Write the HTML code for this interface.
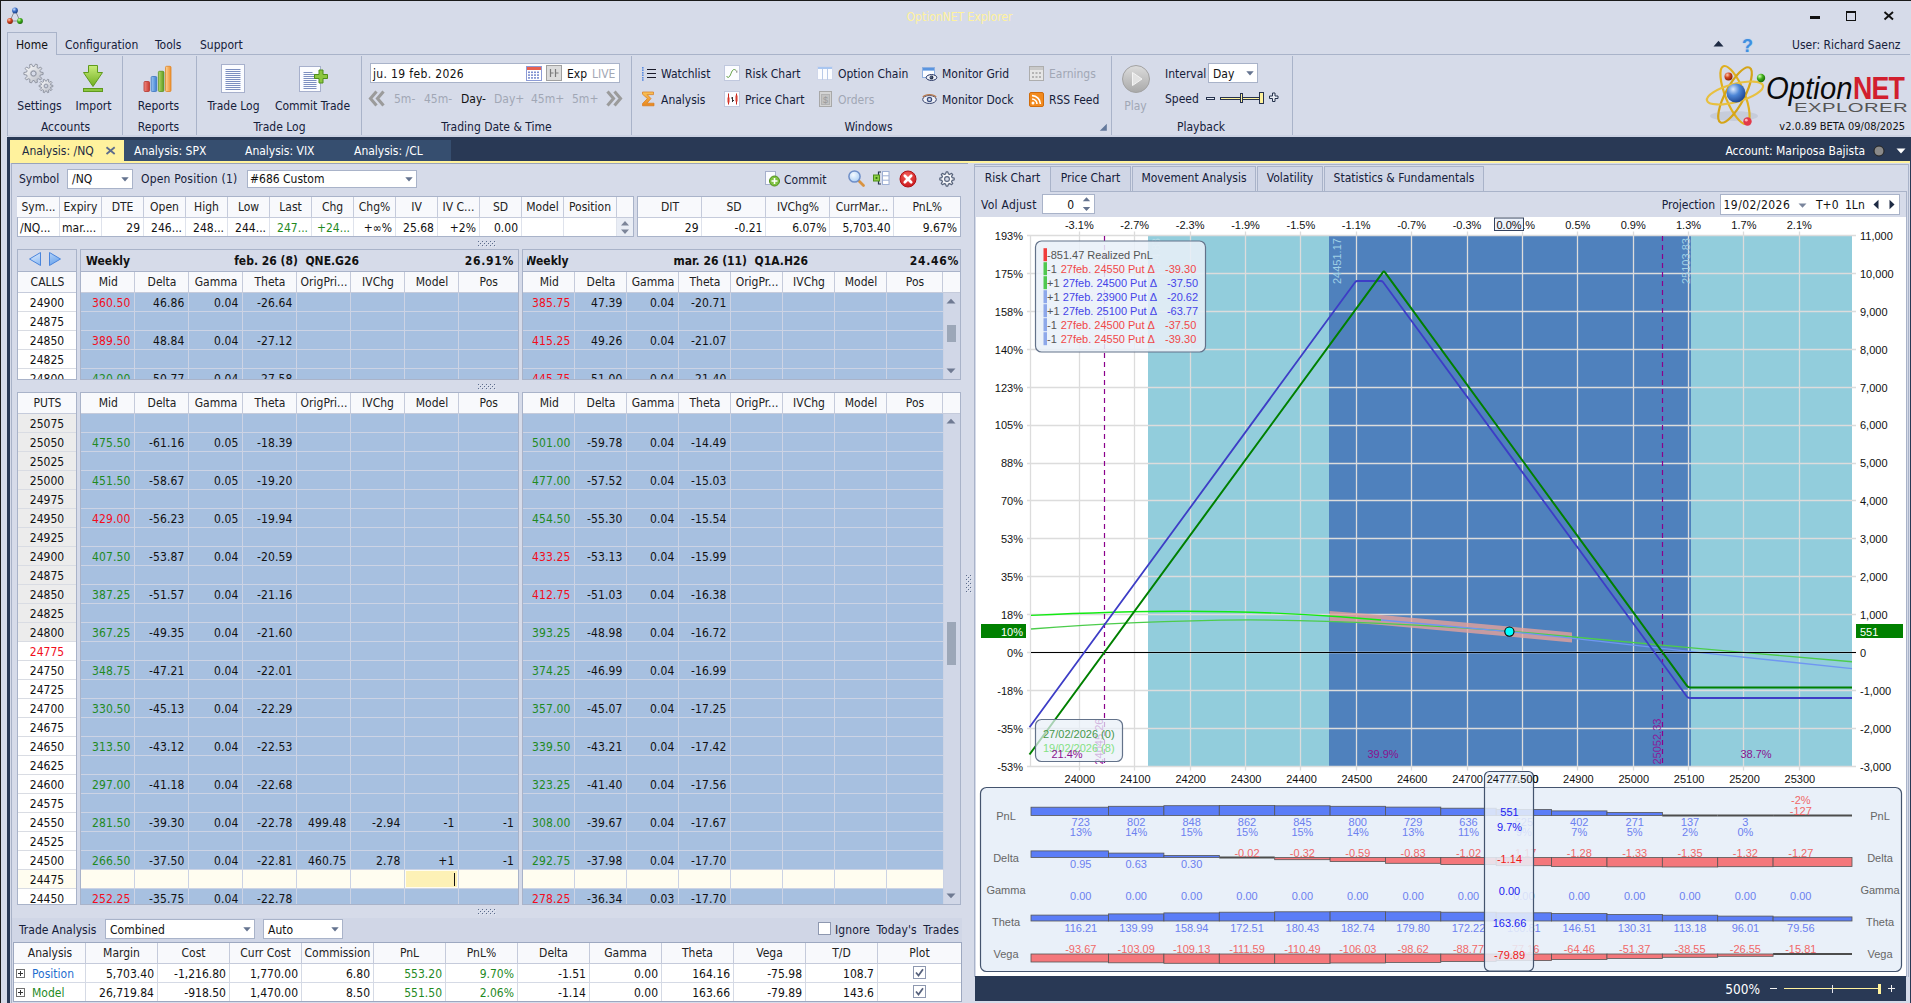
<!DOCTYPE html>
<html lang="en"><head><meta charset="utf-8"><title>OptionNET Explorer</title>
<style>
html,body{margin:0;padding:0}
body{width:1911px;height:1003px;position:relative;overflow:hidden;background:#d6dbe9;font:12px 'DejaVu Sans Condensed','Liberation Sans',sans-serif;color:#111}
.a{position:absolute;display:block}
.t{white-space:nowrap;overflow:visible}
.b{font-weight:bold}
</style></head>
<body>
<div class="a" style="left:0px;top:0px;width:1911px;height:1px;background:#1a1a1a;"></div>
<div class="a" style="left:0px;top:0px;width:1px;height:1003px;background:#1a1a1a;"></div>
<div class="a" style="left:1910px;top:137px;width:1px;height:866px;background:#293955;"></div>
<svg class="a" style="left:5px;top:6px" width="20" height="20" viewBox="0 0 20 20">
<defs>
<radialGradient id="gb" cx="35%" cy="30%" r="70%"><stop offset="0" stop-color="#cfe0ff"/><stop offset=".5" stop-color="#3d72c8"/><stop offset="1" stop-color="#1b3f86"/></radialGradient>
<radialGradient id="gr" cx="35%" cy="30%" r="70%"><stop offset="0" stop-color="#ffc9b0"/><stop offset=".5" stop-color="#d2441f"/><stop offset="1" stop-color="#8a210a"/></radialGradient>
<radialGradient id="gg" cx="35%" cy="30%" r="70%"><stop offset="0" stop-color="#d5ffb0"/><stop offset=".5" stop-color="#3fae1c"/><stop offset="1" stop-color="#1c6e0a"/></radialGradient>
</defs>
<path d="M10 4 L5 15 L15 15 Z" fill="none" stroke="#8b8f98" stroke-width="1"/>
<circle cx="10" cy="4.5" r="2.9" fill="url(#gb)"/><circle cx="5" cy="15" r="2.9" fill="url(#gr)"/><circle cx="15" cy="15" r="2.9" fill="url(#gg)"/></svg>
<div class="a t " style="top:8.5px;line-height:16px;height:16px;left:859.5px;width:200px;text-align:center;color:#fff29d;">OptionNET Explorer</div>
<div class="a" style="left:1810px;top:16px;width:10px;height:3px;background:#111;"></div>
<div class="a" style="left:1846px;top:11px;width:10px;height:10px;border:1px solid #111;border-top:2px solid #111;box-sizing:border-box;"></div>
<svg class="a" style="left:1883px;top:10px" width="12" height="12" viewBox="0 0 12 12"><path d="M1.5 2 L10 9.5 M10 2 L1.5 9.5" stroke="#111" stroke-width="1.9" fill="none"/></svg>
<div class="a" style="left:56px;top:54px;width:1854px;height:1px;background:#a9b3c9;"></div>
<div class="a" style="left:7px;top:54px;width:1px;height:82px;background:#a9b3c9;"></div>
<div class="a" style="left:7px;top:32px;width:50px;height:23px;background:#d6dbe9;border:1px solid #a9b3c9;border-bottom:none;box-sizing:border-box;"></div>
<div class="a t " style="top:36.5px;line-height:16px;height:16px;left:16px;color:#111;">Home</div>
<div class="a t " style="top:36.5px;line-height:16px;height:16px;left:65px;color:#15203a;">Configuration</div>
<div class="a t " style="top:36.5px;line-height:16px;height:16px;left:155px;color:#15203a;">Tools</div>
<div class="a t " style="top:36.5px;line-height:16px;height:16px;left:200px;color:#15203a;">Support</div>
<svg class="a" style="left:1713px;top:40px" width="11" height="7"><path d="M0.5 6.5 L5.5 0.8 L10.5 6.5 Z" fill="#1e2b44"/></svg>
<div class="a t " style="top:36px;line-height:16px;height:16px;left:1739.5px;width:16px;text-align:center;color:#3f8fe0;font:bold 18px 'Liberation Sans','DejaVu Sans',sans-serif;text-shadow:0 0 1.5px #8fc0f2;">?</div>
<div class="a t " style="top:36.5px;line-height:16px;height:16px;left:1792px;color:#15203a;">User: Richard Saenz</div>
<div class="a" style="left:122px;top:56px;width:1px;height:79px;background:#a9b3c9;"></div>
<div class="a" style="left:196px;top:56px;width:1px;height:79px;background:#a9b3c9;"></div>
<div class="a" style="left:361px;top:56px;width:1px;height:79px;background:#a9b3c9;"></div>
<div class="a" style="left:631px;top:56px;width:1px;height:79px;background:#a9b3c9;"></div>
<div class="a" style="left:1111px;top:56px;width:1px;height:79px;background:#a9b3c9;"></div>
<div class="a" style="left:1292px;top:56px;width:1px;height:79px;background:#a9b3c9;"></div>
<div class="a t " style="top:118.5px;line-height:16px;height:16px;left:-34.5px;width:200px;text-align:center;color:#15203a;">Accounts</div>
<div class="a t " style="top:118.5px;line-height:16px;height:16px;left:58.5px;width:200px;text-align:center;color:#15203a;">Reports</div>
<div class="a t " style="top:118.5px;line-height:16px;height:16px;left:179.5px;width:200px;text-align:center;color:#15203a;">Trade Log</div>
<div class="a t " style="top:118.5px;line-height:16px;height:16px;left:396.5px;width:200px;text-align:center;color:#15203a;">Trading Date &amp; Time</div>
<div class="a t " style="top:118.5px;line-height:16px;height:16px;left:768.5px;width:200px;text-align:center;color:#15203a;">Windows</div>
<div class="a t " style="top:118.5px;line-height:16px;height:16px;left:1101px;width:200px;text-align:center;color:#15203a;">Playback</div>
<div class="a t " style="top:97.5px;line-height:16px;height:16px;left:-20.5px;width:120px;text-align:center;color:#15203a;">Settings</div>
<div class="a t " style="top:97.5px;line-height:16px;height:16px;left:33.5px;width:120px;text-align:center;color:#15203a;">Import</div>
<div class="a t " style="top:97.5px;line-height:16px;height:16px;left:98.5px;width:120px;text-align:center;color:#15203a;">Reports</div>
<div class="a t " style="top:97.5px;line-height:16px;height:16px;left:173.5px;width:120px;text-align:center;color:#15203a;">Trade Log</div>
<div class="a t " style="top:97.5px;line-height:16px;height:16px;left:252.5px;width:120px;text-align:center;color:#15203a;">Commit Trade</div>
<svg class="a" style="left:20px;top:60px" width="40" height="36" viewBox="20 60 40 36">
<defs><linearGradient id="gm" x1="0" y1="0" x2="1" y2="1"><stop offset="0" stop-color="#ffffff"/><stop offset="1" stop-color="#b4b8c2"/></linearGradient></defs>
<path d="M43.1 72.5 L43.1 74.5 L40.3 75.0 L39.9 76.3 L41.8 78.3 L40.7 79.9 L38.2 78.7 L37.0 79.5 L37.4 82.3 L35.5 82.9 L34.2 80.5 L32.8 80.5 L31.5 82.9 L29.6 82.3 L30.0 79.5 L28.8 78.7 L26.3 79.9 L25.2 78.3 L27.1 76.3 L26.7 75.0 L23.9 74.5 L23.9 72.5 L26.7 72.0 L27.1 70.7 L25.2 68.7 L26.3 67.1 L28.8 68.3 L30.0 67.5 L29.6 64.7 L31.5 64.1 L32.8 66.5 L34.2 66.5 L35.5 64.1 L37.4 64.7 L37.0 67.5 L38.2 68.3 L40.7 67.1 L41.8 68.7 L39.9 70.7 L40.3 72.0 Z M35.9 73.5 A2.4 2.4 0 1 0 31.1 73.5 A2.4 2.4 0 1 0 35.9 73.5 Z" fill="url(#gm)" stroke="#9196a3" stroke-width="1" stroke-linejoin="round" fill-rule="evenodd"/>
<circle cx="33.5" cy="73.5" r="2.9" fill="none" stroke="#a3a8b5" stroke-width="1"/>
<path d="M52.9 85.3 L52.9 86.7 L50.8 87.0 L50.5 88.0 L52.0 89.5 L51.1 90.6 L49.3 89.7 L48.5 90.2 L48.8 92.3 L47.5 92.7 L46.5 90.9 L45.5 90.9 L44.5 92.7 L43.2 92.3 L43.5 90.2 L42.7 89.7 L40.9 90.6 L40.0 89.5 L41.5 88.0 L41.2 87.0 L39.1 86.7 L39.1 85.3 L41.2 85.0 L41.5 84.0 L40.0 82.5 L40.9 81.4 L42.7 82.3 L43.5 81.8 L43.2 79.7 L44.5 79.3 L45.5 81.1 L46.5 81.1 L47.5 79.3 L48.8 79.7 L48.5 81.8 L49.3 82.3 L51.1 81.4 L52.0 82.5 L50.5 84.0 L50.8 85.0 Z M47.6 86.0 A1.6 1.6 0 1 0 44.4 86.0 A1.6 1.6 0 1 0 47.6 86.0 Z" fill="url(#gm)" stroke="#9196a3" stroke-width="1" stroke-linejoin="round" fill-rule="evenodd"/>
<circle cx="46" cy="86" r="2" fill="none" stroke="#a3a8b5" stroke-width="1"/></svg>
<svg class="a" style="left:80px;top:62px" width="28" height="32" viewBox="80 62 28 32">
<defs><linearGradient id="gi" x1="0" y1="0" x2="0" y2="1"><stop offset="0" stop-color="#c9ec7a"/><stop offset="1" stop-color="#6fae1f"/></linearGradient></defs>
<path d="M88.5 65.5 H97.5 V72.5 H102.5 L93 86.5 L83.5 72.5 H88.5 Z" fill="url(#gi)" stroke="#5f9a1c" stroke-width="1"/>
<rect x="83.5" y="88.5" width="19" height="3" fill="#8cc63f" stroke="#5f9a1c" stroke-width="1"/></svg>
<svg class="a" style="left:140px;top:62px" width="36" height="32" viewBox="140 62 36 32">
<defs>
<linearGradient id="b1" x1="0" x2="1"><stop offset="0" stop-color="#f08a82"/><stop offset="1" stop-color="#c8382e"/></linearGradient>
<linearGradient id="b2" x1="0" x2="1"><stop offset="0" stop-color="#9cc6f2"/><stop offset="1" stop-color="#3e7fd0"/></linearGradient>
<linearGradient id="b3" x1="0" x2="1"><stop offset="0" stop-color="#b4d96a"/><stop offset="1" stop-color="#5d9a1e"/></linearGradient>
<linearGradient id="b4" x1="0" x2="1"><stop offset="0" stop-color="#fbd29a"/><stop offset="1" stop-color="#ee8f2c"/></linearGradient></defs>
<rect x="144" y="81.5" width="5.5" height="10" rx="1" fill="url(#b1)" stroke="#b5332a" stroke-width=".8"/>
<rect x="151.2" y="76.5" width="5.5" height="15" rx="1" fill="url(#b2)" stroke="#3a74c0" stroke-width=".8"/>
<rect x="158.4" y="71.3" width="5.5" height="20.2" rx="1" fill="url(#b3)" stroke="#5a921f" stroke-width=".8"/>
<rect x="165.5" y="66.3" width="5.5" height="25.2" rx="1" fill="url(#b4)" stroke="#e08526" stroke-width=".8"/></svg>
<svg class="a" style="left:218px;top:62px" width="30" height="34" viewBox="218 62 30 34">
<rect x="221.5" y="64.5" width="23" height="28" fill="#fbfcff" stroke="#a7b0cc" stroke-width="1"/><path d="M225.5 69.5 H240.5" stroke="#7d8fc0" stroke-width="1"/><path d="M225.5 71.5 H240.5" stroke="#7d8fc0" stroke-width="1"/><path d="M225.5 73.5 H240.5" stroke="#7d8fc0" stroke-width="1"/><path d="M225.5 75.5 H240.5" stroke="#7d8fc0" stroke-width="1"/><path d="M225.5 77.5 H240.5" stroke="#7d8fc0" stroke-width="1"/><path d="M225.5 79.5 H240.5" stroke="#7d8fc0" stroke-width="1"/><path d="M225.5 81.5 H240.5" stroke="#7d8fc0" stroke-width="1"/><path d="M225.5 83.5 H240.5" stroke="#7d8fc0" stroke-width="1"/><path d="M225.5 85.5 H240.5" stroke="#7d8fc0" stroke-width="1"/><path d="M225.5 87.5 H240.5" stroke="#7d8fc0" stroke-width="1"/><path d="M225.5 89.5 H240.5" stroke="#7d8fc0" stroke-width="1"/></svg>
<svg class="a" style="left:296px;top:62px" width="34" height="34" viewBox="296 62 34 34">
<rect x="299.5" y="66.5" width="21" height="25" fill="#fbfcff" stroke="#a7b0cc" stroke-width="1"/><path d="M303.5 72.5 H312.5" stroke="#7d8fc0" stroke-width="1"/><path d="M303.5 74.5 H316.5" stroke="#7d8fc0" stroke-width="1"/><path d="M303.5 76.5 H316.5" stroke="#7d8fc0" stroke-width="1"/><path d="M303.5 78.5 H316.5" stroke="#7d8fc0" stroke-width="1"/><path d="M303.5 80.5 H316.5" stroke="#7d8fc0" stroke-width="1"/><path d="M303.5 82.5 H316.5" stroke="#7d8fc0" stroke-width="1"/><path d="M303.5 84.5 H316.5" stroke="#7d8fc0" stroke-width="1"/><path d="M303.5 86.5 H316.5" stroke="#7d8fc0" stroke-width="1"/><path d="M303.5 88.5 H316.5" stroke="#7d8fc0" stroke-width="1"/>
<path d="M318 68 h4.5 v-4.5 h4 v4.5 h4.5 v4 h-4.5 v4.5 h-4 v-4.5 h-4.5 z" transform="translate(-3.5,6.5)" fill="#8cc63f" stroke="#4f8f1a" stroke-width="1"/></svg>
<div class="a" style="left:370px;top:63px;width:250px;height:20px;background:#fff;border:1px solid #a9b3c9;box-sizing:border-box;"></div>
<div class="a t " style="top:65.5px;line-height:16px;height:16px;left:373px;color:#111;letter-spacing:.35px;">ju. 19 feb. 2026</div>
<svg class="a" style="left:526px;top:66px" width="16" height="15" viewBox="0 0 16 15"><rect x=".5" y=".5" width="15" height="14" fill="#fff" stroke="#8d9bd6"/><rect x="1" y="1" width="14" height="3" fill="#e8604f"/>
<g fill="#7d8fd0"><rect x="2" y="5.5" width="2" height="1.6"/><rect x="5" y="5.5" width="2" height="1.6"/><rect x="8" y="5.5" width="2" height="1.6"/><rect x="11" y="5.5" width="2" height="1.6"/><rect x="2" y="8.3" width="2" height="1.6"/><rect x="5" y="8.3" width="2" height="1.6"/><rect x="8" y="8.3" width="2" height="1.6"/><rect x="11" y="8.3" width="2" height="1.6"/><rect x="2" y="11.1" width="2" height="1.6"/><rect x="5" y="11.1" width="2" height="1.6"/><rect x="8" y="11.1" width="2" height="1.6"/><rect x="11" y="11.1" width="2" height="1.6"/></g></svg>
<div class="a" style="left:546px;top:65px;width:16px;height:16px;background:#dcdcdc;border:1px solid #a0a0a0;box-sizing:border-box;"></div>
<svg class="a" style="left:546px;top:65px" width="16" height="16"><path d="M4.5 4 V12 M4.5 8 H7.5 M9.5 4 V12 M9.5 8 H12.5" stroke="#7a7a7a" stroke-width="1.2" fill="none"/></svg>
<div class="a t " style="top:65.5px;line-height:16px;height:16px;left:567px;color:#111;">Exp</div>
<div class="a t " style="top:65.5px;line-height:16px;height:16px;left:592px;color:#a3a8b4;">LIVE</div>
<div class="a t " style="top:90.5px;line-height:16px;height:16px;left:394px;color:#a1a7b5;">5m-</div>
<div class="a t " style="top:90.5px;line-height:16px;height:16px;left:424px;color:#a1a7b5;">45m-</div>
<div class="a t " style="top:90.5px;line-height:16px;height:16px;left:461px;color:#111;">Day-</div>
<div class="a t " style="top:90.5px;line-height:16px;height:16px;left:494px;color:#a1a7b5;">Day+</div>
<div class="a t " style="top:90.5px;line-height:16px;height:16px;left:531px;color:#a1a7b5;">45m+</div>
<div class="a t " style="top:90.5px;line-height:16px;height:16px;left:572px;color:#a1a7b5;">5m+</div>
<svg class="a" style="left:368px;top:90px" width="18" height="17"><path d="M8.5 1.5 L2.5 8.5 L8.5 15.5 M15.5 1.5 L9.5 8.5 L15.5 15.5" stroke="#9b9b9b" stroke-width="3.1" fill="none"/></svg>
<svg class="a" style="left:605px;top:90px" width="18" height="17"><path d="M2.5 1.5 L8.5 8.5 L2.5 15.5 M9.5 1.5 L15.5 8.5 L9.5 15.5" stroke="#9b9b9b" stroke-width="3.1" fill="none"/></svg>
<div class="a t " style="top:65.5px;line-height:16px;height:16px;left:661px;color:#15203a;">Watchlist</div>
<div class="a t " style="top:91.5px;line-height:16px;height:16px;left:661px;color:#15203a;">Analysis</div>
<div class="a t " style="top:65.5px;line-height:16px;height:16px;left:745px;color:#15203a;">Risk Chart</div>
<div class="a t " style="top:91.5px;line-height:16px;height:16px;left:745px;color:#15203a;">Price Chart</div>
<div class="a t " style="top:65.5px;line-height:16px;height:16px;left:838px;color:#15203a;">Option Chain</div>
<div class="a t " style="top:91.5px;line-height:16px;height:16px;left:838px;color:#a1a7b5;">Orders</div>
<div class="a t " style="top:65.5px;line-height:16px;height:16px;left:942px;color:#15203a;">Monitor Grid</div>
<div class="a t " style="top:91.5px;line-height:16px;height:16px;left:942px;color:#15203a;">Monitor Dock</div>
<div class="a t " style="top:65.5px;line-height:16px;height:16px;left:1049px;color:#a1a7b5;">Earnings</div>
<div class="a t " style="top:91.5px;line-height:16px;height:16px;left:1049px;color:#15203a;">RSS Feed</div>
<svg class="a" style="left:641px;top:66px" width="17" height="16"><g stroke="#1a1a2a" stroke-width="1.1"><path d="M6 3.5 H15 M6 7.5 H15 M6 11.5 H15"/></g><g fill="#5a8ae0"><rect x="1" y="1" width="1.6" height="1.6"/><rect x="1" y="3.4" width="1.6" height="1.6"/><rect x="1" y="6" width="1.6" height="1.6"/><rect x="1" y="8.4" width="1.6" height="1.6"/><rect x="1" y="11" width="1.6" height="1.6"/><rect x="1" y="13.2" width="1.6" height="1.6"/></g></svg>
<svg class="a" style="left:641px;top:90px" width="16" height="18"><defs><linearGradient id="gs" x1="0" y1="0" x2="0" y2="1"><stop offset="0" stop-color="#f9c45a"/><stop offset="1" stop-color="#e8861c"/></linearGradient></defs><path d="M1.5 2 H12.5 V4.6 H6.2 L10 8.6 L6 13.2 H13 V15.8 H1.5 V13.6 L6.4 8.6 L1.5 4.2 Z" fill="url(#gs)" stroke="#d9791a" stroke-width=".7"/></svg>
<svg class="a" style="left:724px;top:65px" width="17" height="17"><rect x=".5" y=".5" width="15" height="15" fill="#fbfcff" stroke="#c0c8de"/><path d="M2.5 11 C4 13.5 5.5 12.5 7 8.5 C8.5 4.5 10 3.5 12 5.5" stroke="#5a9a3a" stroke-width="1" fill="none"/><path d="M12.8 5.5 v2.2" stroke="#777" stroke-width="1"/></svg>
<svg class="a" style="left:724px;top:91px" width="17" height="17"><rect x=".5" y=".5" width="15" height="15" fill="#fbfcff" stroke="#c0c8de"/><g stroke="#c8261c" stroke-width="1"><path d="M4.5 2.5 V13.5 M12.5 2.5 V13.5"/></g><rect x="3.5" y="6.5" width="2" height="5" fill="#d9382c"/><rect x="11.5" y="4.5" width="2" height="6" fill="#d9382c"/><path d="M8.5 6 V11 M7 7 h1.5 M8.5 9.5 h1.5" stroke="#333" stroke-width="1"/></svg>
<svg class="a" style="left:817px;top:66px" width="17" height="15"><rect x=".5" y=".5" width="15" height="13" fill="#fbfcff" stroke="#d0d7ea"/><rect x="1" y="1" width="14" height="2" fill="#a9c6f0"/><path d="M5.5 3 V14 M10.5 3 V14" stroke="#b9cae8" stroke-width="1"/></svg>
<svg class="a" style="left:819px;top:91px" width="13" height="16"><rect x=".5" y=".5" width="12" height="15" fill="#d4d4d4" stroke="#a8a8a8"/><rect x="2.5" y="3.5" width="8" height="10" fill="#c2c2c2" stroke="#b2b2b2"/><text x="6.5" y="12" font-size="9" font-family="Liberation Sans,sans-serif" fill="#9a9a9a" text-anchor="middle">$</text></svg>
<svg class="a" style="left:921px;top:66px" width="18" height="16"><rect x="1.5" y="1.5" width="12" height="10" fill="#fbfcff" stroke="#8fb0e0"/><rect x="2" y="2" width="11" height="2.6" fill="#5a95e0"/><ellipse cx="10.5" cy="11.5" rx="5.3" ry="2.9" fill="#f2f4fa" stroke="#1c2a5a" stroke-width="1"/><circle cx="10.5" cy="11.5" r="1.9" fill="#26324d"/><circle cx="10" cy="11" r=".6" fill="#cfd8f0"/></svg>
<svg class="a" style="left:921px;top:92px" width="18" height="14"><ellipse cx="8.5" cy="7.5" rx="6.8" ry="4" fill="#eef0f7" stroke="#3a4670" stroke-width="1"/><circle cx="8.5" cy="7.5" r="2.7" fill="#3b4f80"/><rect x="7.3" y="6.3" width="2.4" height="2.4" fill="#dfe6f5"/><path d="M1.8 5.2 C4.5 1.8 12.5 1.8 15.2 5.2" stroke="#b9794a" stroke-width="1.1" fill="none"/></svg>
<svg class="a" style="left:1029px;top:66px" width="15" height="15"><rect x=".5" y=".5" width="14" height="14" fill="#e6e6e6" stroke="#adadad"/><rect x="1" y="1" width="13" height="3" fill="#c9c9c9"/><g fill="#b4b4b4"><rect x="3" y="6" width="2" height="2"/><rect x="6.5" y="6" width="2" height="2"/><rect x="10" y="6" width="2" height="2"/><rect x="3" y="10" width="2" height="2"/><rect x="6.5" y="10" width="2" height="2"/><rect x="10" y="10" width="2" height="2"/></g></svg>
<svg class="a" style="left:1029px;top:92px" width="15" height="15"><rect x=".5" y=".5" width="14" height="14" rx="1.5" fill="#f28a1e" stroke="#d06c0c"/><circle cx="4" cy="11" r="1.5" fill="#fff"/><path d="M3 7 A5 5 0 0 1 8 12 M3 3.6 A8.4 8.4 0 0 1 11.4 12" stroke="#fff" stroke-width="1.6" fill="none"/></svg>
<svg class="a" style="left:1099px;top:123px" width="9" height="9"><path d="M7.8 0.8 V7.8 H0.8 Z" fill="#64799c"/></svg>
<svg class="a" style="left:1121px;top:64px" width="30" height="30"><defs><linearGradient id="gp" x1="0" y1="0" x2="0" y2="1"><stop offset="0" stop-color="#dcdcdc"/><stop offset="1" stop-color="#a9a9a9"/></linearGradient></defs><circle cx="15" cy="15" r="13.5" fill="url(#gp)" stroke="#a2a2a2"/><path d="M11.5 8.5 L21 15 L11.5 21.5 Z" fill="#e3e3e3" stroke="#f4f4f4" stroke-width="1"/></svg>
<div class="a t " style="top:97.5px;line-height:16px;height:16px;left:1105.5px;width:60px;text-align:center;color:#a1a7b5;">Play</div>
<div class="a t " style="top:65.5px;line-height:16px;height:16px;left:1165px;color:#15203a;">Interval</div>
<div class="a t " style="top:90.5px;line-height:16px;height:16px;left:1165px;color:#15203a;">Speed</div>
<div class="a" style="left:1208px;top:63px;width:50px;height:20px;background:#fff;border:1px solid #a9b3c9;box-sizing:border-box;"></div>
<div class="a t " style="top:65.5px;line-height:16px;height:16px;left:1213px;color:#111;">Day</div>
<svg class="a" style="left:1246px;top:71px" width="8" height="5"><path d="M0.3 0.3 H7.7 L4 4.4 Z" fill="#64738f"/></svg>
<div class="a" style="left:1206px;top:97px;width:9px;height:3px;background:#e8ecf4;border:1px solid #26324d;box-sizing:border-box;"></div>
<div class="a" style="left:1220px;top:97px;width:42px;height:3px;background:#fff29d;border:1px solid #26324d;box-sizing:border-box;"></div>
<div class="a" style="left:1240px;top:93px;width:3px;height:10px;background:#fff29d;border:1px solid #26324d;box-sizing:border-box;"></div>
<div class="a" style="left:1259px;top:92px;width:5px;height:12px;background:#fff29d;border:1px solid #26324d;box-sizing:border-box;"></div>
<svg class="a" style="left:1269px;top:92px" width="10" height="11"><path d="M3.5 1 h2.5 v3 h3 v2.5 h-3 v3 h-2.5 v-3 h-3 v-2.5 h3 z" fill="#e8ecf4" stroke="#26324d" stroke-width="1"/></svg>
<svg class="a" style="left:1704px;top:60px" width="66" height="72" viewBox="0 0 66 72">
<defs><radialGradient id="lb" cx="35%" cy="30%" r="75%"><stop offset="0" stop-color="#dbe9ff"/><stop offset=".45" stop-color="#4d86d6"/><stop offset="1" stop-color="#1d438f"/></radialGradient></defs>
<ellipse cx="30" cy="56" rx="24" ry="5" fill="#b9bfce" opacity=".55"/>
<g fill="none" stroke="#e0b020" stroke-width="2.2">
<ellipse cx="31" cy="35" rx="9.5" ry="31" transform="rotate(-22 31 35)"/>
<ellipse cx="31" cy="35" rx="9.5" ry="31" transform="rotate(28 31 35)" stroke="#d4a418"/>
<ellipse cx="31" cy="33" rx="9" ry="29" transform="rotate(75 31 33)" stroke="#e8c040"/></g>
<circle cx="32" cy="33" r="9.5" fill="url(#lb)"/>
<circle cx="24.5" cy="16.5" r="4" fill="url(#gr)"/><circle cx="57" cy="18" r="4.2" fill="url(#gg)"/><circle cx="43.5" cy="61.5" r="4.2" fill="#e23a4a"/><circle cx="42.3" cy="60.2" r="1.4" fill="#ffb3b8"/></svg>
<div class="a" style="left:1766px;top:70px;width:160px;height:36px;line-height:36px;white-space:nowrap;font:italic 31px 'Liberation Sans','DejaVu Sans',sans-serif;letter-spacing:0.05px;color:#0a0a0a;transform-origin:0 50%;transform:scaleX(.945)">Option<span style="display:inline-block;font:bold 32px 'Liberation Sans','DejaVu Sans',sans-serif;color:#d21f2e;font-style:normal;letter-spacing:-1px;transform-origin:0 50%;transform:scaleX(.885)">NET</span></div>
<div class="a" style="left:1794px;top:100px;width:116px;height:14px;line-height:14px;white-space:nowrap;font:13px 'Liberation Sans','DejaVu Sans',sans-serif;color:#555;transform-origin:0 50%;transform:scaleX(1.56);letter-spacing:0.3px">EXPLORER</div>
<div class="a t " style="top:119px;line-height:16px;height:16px;left:1705px;width:200px;text-align:right;color:#111;font-size:11px;">v2.0.89 BETA 09/08/2025</div>
<div class="a" style="left:8px;top:135px;width:1902px;height:2px;background:#ccd2e3;"></div>
<div class="a" style="left:7px;top:137px;width:1903px;height:25px;background:#293955;"></div>
<div class="a" style="left:7px;top:162px;width:3px;height:841px;background:#293955;"></div>
<div class="a" style="left:10px;top:140px;width:114px;height:22px;background:#fff29d;"></div>
<div class="a t " style="top:142.5px;line-height:16px;height:16px;left:22px;color:#1e2b44;">Analysis: /NQ</div>
<svg class="a" style="left:105px;top:146px" width="11" height="10"><path d="M1.5 1.3 L9.7 8 M9.7 1.3 L1.5 8" stroke="#5d6c8c" stroke-width="1.8"/></svg>
<div class="a" style="left:124px;top:140px;width:327px;height:22px;background:#364e6f;"></div>
<div class="a t " style="top:142.5px;line-height:16px;height:16px;left:134px;color:#fff;">Analysis: SPX</div>
<div class="a t " style="top:142.5px;line-height:16px;height:16px;left:245px;color:#fff;">Analysis: VIX</div>
<div class="a t " style="top:142.5px;line-height:16px;height:16px;left:354px;color:#fff;">Analysis: /CL</div>
<div class="a" style="left:10px;top:161px;width:1900px;height:2px;background:#fff29d;"></div>
<div class="a t " style="top:143px;line-height:16px;height:16px;left:1645px;width:220px;text-align:right;color:#fff;">Account: Mariposa Bajista</div>
<svg class="a" style="left:1873px;top:145px" width="12" height="12"><circle cx="6" cy="6" r="5" fill="#8a8a8a" stroke="#222"/></svg>
<svg class="a" style="left:1896px;top:148px" width="10" height="6"><path d="M0.5 0.5 H9.5 L5 5.5 Z" fill="#fff"/></svg>
<div class="a" style="left:11px;top:163px;width:957px;height:841px;border:1px solid #a9b3c8;box-sizing:border-box;border-bottom:none;border-right:none;border-top-color:#98a3bb;"></div>
<div class="a t " style="top:170.5px;line-height:16px;height:16px;left:19px;color:#15203a;">Symbol</div>
<div class="a" style="left:67px;top:169px;width:66px;height:20px;background:#fff;border:1px solid #a9b3c9;box-sizing:border-box;"></div>
<div class="a t " style="top:171px;line-height:16px;height:16px;left:72px;color:#111;">/NQ</div>
<svg class="a" style="left:121px;top:177px" width="8" height="5"><path d="M0.3 0.3 H7.7 L4 4.4 Z" fill="#64738f"/></svg>
<div class="a t " style="top:170.5px;line-height:16px;height:16px;left:141px;color:#15203a;letter-spacing:.2px;">Open Position (1)</div>
<div class="a" style="left:247px;top:170px;width:170px;height:18px;background:#fff;border:1px solid #a9b3c9;box-sizing:border-box;"></div>
<div class="a t " style="top:171px;line-height:16px;height:16px;left:250px;color:#111;">#686 Custom</div>
<svg class="a" style="left:405px;top:177px" width="8" height="5"><path d="M0.3 0.3 H7.7 L4 4.4 Z" fill="#64738f"/></svg>
<svg class="a" style="left:764px;top:170px" width="17" height="17"><rect x="1.5" y="1.5" width="10" height="13" fill="#fbfcff" stroke="#a7b0cc"/><circle cx="10.5" cy="11" r="5" fill="#7fc241" stroke="#4f8f1a"/><path d="M10.5 8 V14 M7.5 11 H13.5" stroke="#fff" stroke-width="1.6"/></svg>
<div class="a t " style="top:171.5px;line-height:16px;height:16px;left:784px;color:#15203a;">Commit</div>
<svg class="a" style="left:847px;top:169px" width="19" height="19"><defs><radialGradient id="gz" cx="40%" cy="35%" r="70%"><stop offset="0" stop-color="#f4faff"/><stop offset="1" stop-color="#a9cdf5"/></radialGradient></defs><path d="M11.5 11.5 L16.5 16.5" stroke="#d9933f" stroke-width="2.8" stroke-linecap="round"/><circle cx="7.5" cy="7.5" r="5.6" fill="url(#gz)" stroke="#6f8fc8" stroke-width="1.5"/></svg>
<svg class="a" style="left:873px;top:171px" width="17" height="15"><rect x="9.5" y=".5" width="6.5" height="13" fill="#fff" stroke="#9fb0d4"/><path d="M9.5 4.8 H16 M9.5 9.2 H16" stroke="#9fb0d4"/><path d="M8 1 H5.5 V13 H8" stroke="#26324d" stroke-width="1.2" fill="none"/><rect x=".5" y="4" width="6" height="6" fill="#8ccf45" stroke="#4f8f1a"/><rect x="2.6" y="6.1" width="1.8" height="1.8" fill="#2f6a10"/></svg>
<svg class="a" style="left:899px;top:170px" width="18" height="18"><defs><radialGradient id="gx" cx="45%" cy="30%" r="75%"><stop offset="0" stop-color="#f4605a"/><stop offset="1" stop-color="#c81418"/></radialGradient></defs><circle cx="9" cy="9" r="8" fill="url(#gx)" stroke="#b01216"/><path d="M5.8 5.8 L12.2 12.2 M12.2 5.8 L5.8 12.2" stroke="#fff" stroke-width="2.7" stroke-linecap="round"/></svg>
<svg class="a" style="left:939px;top:171px" width="16" height="16"><path d="M15.2 7.2 L15.2 8.8 L13.1 9.4 L12.6 10.6 L13.7 12.5 L12.5 13.7 L10.6 12.6 L9.4 13.1 L8.8 15.2 L7.2 15.2 L6.6 13.1 L5.4 12.6 L3.5 13.7 L2.3 12.5 L3.4 10.6 L2.9 9.4 L0.8 8.8 L0.8 7.2 L2.9 6.6 L3.4 5.4 L2.3 3.5 L3.5 2.3 L5.4 3.4 L6.6 2.9 L7.2 0.8 L8.8 0.8 L9.4 2.9 L10.6 3.4 L12.5 2.3 L13.7 3.5 L12.6 5.4 L13.1 6.6 Z" fill="#f4f5f8" stroke="#56627a" stroke-width="1.2" stroke-linejoin="round"/><circle cx="8" cy="8" r="2.4" fill="#d6dbe9" stroke="#56627a" stroke-width="1.1"/></svg>
<div class="a" style="left:17px;top:196px;width:617px;height:41px;background:#fff;border:1px solid #a9b3c9;box-sizing:border-box;"></div>
<div class="a" style="left:17px;top:197px;width:616px;height:20px;background:#f8f9fc;"></div>
<div class="a t " style="top:199px;line-height:16px;height:16px;left:17.5px;width:42px;text-align:center;color:#222;">Sym...</div>
<div class="a" style="left:59px;top:197px;width:1px;height:20px;background:#c5cbdb;"></div>
<div class="a t " style="top:199px;line-height:16px;height:16px;left:59.5px;width:42px;text-align:center;color:#222;">Expiry</div>
<div class="a" style="left:101px;top:197px;width:1px;height:20px;background:#c5cbdb;"></div>
<div class="a t " style="top:199px;line-height:16px;height:16px;left:101.5px;width:42px;text-align:center;color:#222;">DTE</div>
<div class="a" style="left:143px;top:197px;width:1px;height:20px;background:#c5cbdb;"></div>
<div class="a t " style="top:199px;line-height:16px;height:16px;left:143.5px;width:42px;text-align:center;color:#222;">Open</div>
<div class="a" style="left:185px;top:197px;width:1px;height:20px;background:#c5cbdb;"></div>
<div class="a t " style="top:199px;line-height:16px;height:16px;left:185.5px;width:42px;text-align:center;color:#222;">High</div>
<div class="a" style="left:227px;top:197px;width:1px;height:20px;background:#c5cbdb;"></div>
<div class="a t " style="top:199px;line-height:16px;height:16px;left:227.5px;width:42px;text-align:center;color:#222;">Low</div>
<div class="a" style="left:269px;top:197px;width:1px;height:20px;background:#c5cbdb;"></div>
<div class="a t " style="top:199px;line-height:16px;height:16px;left:269.5px;width:42px;text-align:center;color:#222;">Last</div>
<div class="a" style="left:311px;top:197px;width:1px;height:20px;background:#c5cbdb;"></div>
<div class="a t " style="top:199px;line-height:16px;height:16px;left:311.5px;width:42px;text-align:center;color:#222;">Chg</div>
<div class="a" style="left:353px;top:197px;width:1px;height:20px;background:#c5cbdb;"></div>
<div class="a t " style="top:199px;line-height:16px;height:16px;left:353.5px;width:42px;text-align:center;color:#222;">Chg%</div>
<div class="a" style="left:395px;top:197px;width:1px;height:20px;background:#c5cbdb;"></div>
<div class="a t " style="top:199px;line-height:16px;height:16px;left:395.5px;width:42px;text-align:center;color:#222;">IV</div>
<div class="a" style="left:437px;top:197px;width:1px;height:20px;background:#c5cbdb;"></div>
<div class="a t " style="top:199px;line-height:16px;height:16px;left:437.5px;width:42px;text-align:center;color:#222;">IV C...</div>
<div class="a" style="left:479px;top:197px;width:1px;height:20px;background:#c5cbdb;"></div>
<div class="a t " style="top:199px;line-height:16px;height:16px;left:479.5px;width:42px;text-align:center;color:#222;">SD</div>
<div class="a" style="left:521px;top:197px;width:1px;height:20px;background:#c5cbdb;"></div>
<div class="a t " style="top:199px;line-height:16px;height:16px;left:521.5px;width:42px;text-align:center;color:#222;">Model</div>
<div class="a" style="left:563px;top:197px;width:1px;height:20px;background:#c5cbdb;"></div>
<div class="a t " style="top:199px;line-height:16px;height:16px;left:563.5px;width:53px;text-align:center;color:#222;">Position</div>
<div class="a" style="left:616px;top:197px;width:1px;height:20px;background:#c5cbdb;"></div>
<div class="a" style="left:18px;top:217px;width:615px;height:1px;background:#c5cbdb;"></div>
<div class="a" style="left:59px;top:218px;width:1px;height:18px;background:#dfe3ec;"></div>
<div class="a" style="left:101px;top:218px;width:1px;height:18px;background:#dfe3ec;"></div>
<div class="a" style="left:143px;top:218px;width:1px;height:18px;background:#dfe3ec;"></div>
<div class="a" style="left:185px;top:218px;width:1px;height:18px;background:#dfe3ec;"></div>
<div class="a" style="left:227px;top:218px;width:1px;height:18px;background:#dfe3ec;"></div>
<div class="a" style="left:269px;top:218px;width:1px;height:18px;background:#dfe3ec;"></div>
<div class="a" style="left:311px;top:218px;width:1px;height:18px;background:#dfe3ec;"></div>
<div class="a" style="left:353px;top:218px;width:1px;height:18px;background:#dfe3ec;"></div>
<div class="a" style="left:395px;top:218px;width:1px;height:18px;background:#dfe3ec;"></div>
<div class="a" style="left:437px;top:218px;width:1px;height:18px;background:#dfe3ec;"></div>
<div class="a" style="left:479px;top:218px;width:1px;height:18px;background:#dfe3ec;"></div>
<div class="a" style="left:521px;top:218px;width:1px;height:18px;background:#dfe3ec;"></div>
<div class="a" style="left:563px;top:218px;width:1px;height:18px;background:#dfe3ec;"></div>
<div class="a" style="left:616px;top:218px;width:1px;height:18px;background:#dfe3ec;"></div>
<div class="a t " style="top:220px;line-height:16px;height:16px;left:20px;color:#111;">/NQ...</div>
<div class="a t " style="top:220px;line-height:16px;height:16px;left:62px;color:#111;">mar....</div>
<div class="a t " style="top:220px;line-height:16px;height:16px;left:80px;width:60px;text-align:right;color:#111;">29</div>
<div class="a t " style="top:220px;line-height:16px;height:16px;left:122px;width:60px;text-align:right;color:#111;">246...</div>
<div class="a t " style="top:220px;line-height:16px;height:16px;left:164px;width:60px;text-align:right;color:#111;">248...</div>
<div class="a t " style="top:220px;line-height:16px;height:16px;left:206px;width:60px;text-align:right;color:#111;">244...</div>
<div class="a t " style="top:220px;line-height:16px;height:16px;left:248px;width:60px;text-align:right;color:#1f8a1f;">247...</div>
<div class="a t " style="top:220px;line-height:16px;height:16px;left:290px;width:60px;text-align:right;color:#1f8a1f;">+24...</div>
<div class="a t " style="top:220px;line-height:16px;height:16px;left:332px;width:60px;text-align:right;color:#111;">+∞%</div>
<div class="a t " style="top:220px;line-height:16px;height:16px;left:374px;width:60px;text-align:right;color:#111;">25.68</div>
<div class="a t " style="top:220px;line-height:16px;height:16px;left:416px;width:60px;text-align:right;color:#111;">+2%</div>
<div class="a t " style="top:220px;line-height:16px;height:16px;left:458px;width:60px;text-align:right;color:#111;">0.00</div>
<div class="a" style="left:617px;top:218px;width:16px;height:18px;background:#e9edf5;"></div>
<svg class="a" style="left:620px;top:220px" width="10" height="15"><path d="M1 5.5 L5 1 L9 5.5 Z M1 9.5 L5 14 L9 9.5 Z" fill="#7c8599"/></svg>
<div class="a" style="left:637px;top:196px;width:324px;height:41px;background:#fff;border:1px solid #a9b3c9;box-sizing:border-box;"></div>
<div class="a" style="left:637.5px;top:197px;width:322.5px;height:20px;background:#f8f9fc;"></div>
<div class="a t " style="top:199px;line-height:16px;height:16px;left:638px;width:64.0px;text-align:center;color:#222;">DIT</div>
<div class="a" style="left:701px;top:197px;width:1px;height:20px;background:#c5cbdb;"></div>
<div class="a t " style="top:199px;line-height:16px;height:16px;left:702px;width:64.0px;text-align:center;color:#222;">SD</div>
<div class="a" style="left:765px;top:197px;width:1px;height:20px;background:#c5cbdb;"></div>
<div class="a t " style="top:199px;line-height:16px;height:16px;left:766px;width:64.0px;text-align:center;color:#222;">IVChg%</div>
<div class="a" style="left:829px;top:197px;width:1px;height:20px;background:#c5cbdb;"></div>
<div class="a t " style="top:199px;line-height:16px;height:16px;left:830px;width:64.0px;text-align:center;color:#222;">CurrMar...</div>
<div class="a" style="left:893px;top:197px;width:1px;height:20px;background:#c5cbdb;"></div>
<div class="a t " style="top:199px;line-height:16px;height:16px;left:894px;width:66.5px;text-align:center;color:#222;">PnL%</div>
<div class="a" style="left:638px;top:217px;width:322px;height:1px;background:#c5cbdb;"></div>
<div class="a" style="left:701px;top:218px;width:1px;height:18px;background:#dfe3ec;"></div>
<div class="a" style="left:765px;top:218px;width:1px;height:18px;background:#dfe3ec;"></div>
<div class="a" style="left:829px;top:218px;width:1px;height:18px;background:#dfe3ec;"></div>
<div class="a" style="left:893px;top:218px;width:1px;height:18px;background:#dfe3ec;"></div>
<div class="a t " style="top:220px;line-height:16px;height:16px;left:628.5px;width:70px;text-align:right;color:#111;">29</div>
<div class="a t " style="top:220px;line-height:16px;height:16px;left:692.5px;width:70px;text-align:right;color:#111;">-0.21</div>
<div class="a t " style="top:220px;line-height:16px;height:16px;left:756.5px;width:70px;text-align:right;color:#111;">6.07%</div>
<div class="a t " style="top:220px;line-height:16px;height:16px;left:820.5px;width:70px;text-align:right;color:#111;">5,703.40</div>
<div class="a t " style="top:220px;line-height:16px;height:16px;left:887px;width:70px;text-align:right;color:#111;">9.67%</div>
<svg class="a" style="left:478px;top:241px" width="18" height="6" fill="#5c6c8c"><rect x="0" y="0" width="1" height="1"/><rect x="1" y="1" width="1" height="1" fill="#e4e8f2"/><rect x="4" y="0" width="1" height="1"/><rect x="5" y="1" width="1" height="1" fill="#e4e8f2"/><rect x="8" y="0" width="1" height="1"/><rect x="9" y="1" width="1" height="1" fill="#e4e8f2"/><rect x="12" y="0" width="1" height="1"/><rect x="13" y="1" width="1" height="1" fill="#e4e8f2"/><rect x="16" y="0" width="1" height="1"/><rect x="17" y="1" width="1" height="1" fill="#e4e8f2"/><rect x="2" y="2" width="1" height="1"/><rect x="3" y="3" width="1" height="1" fill="#e4e8f2"/><rect x="6" y="2" width="1" height="1"/><rect x="7" y="3" width="1" height="1" fill="#e4e8f2"/><rect x="10" y="2" width="1" height="1"/><rect x="11" y="3" width="1" height="1" fill="#e4e8f2"/><rect x="14" y="2" width="1" height="1"/><rect x="15" y="3" width="1" height="1" fill="#e4e8f2"/><rect x="0" y="4" width="1" height="1"/><rect x="1" y="5" width="1" height="1" fill="#e4e8f2"/><rect x="4" y="4" width="1" height="1"/><rect x="5" y="5" width="1" height="1" fill="#e4e8f2"/><rect x="8" y="4" width="1" height="1"/><rect x="9" y="5" width="1" height="1" fill="#e4e8f2"/><rect x="12" y="4" width="1" height="1"/><rect x="13" y="5" width="1" height="1" fill="#e4e8f2"/><rect x="16" y="4" width="1" height="1"/><rect x="17" y="5" width="1" height="1" fill="#e4e8f2"/></svg>
<svg class="a" style="left:478px;top:384px" width="18" height="6" fill="#5c6c8c"><rect x="0" y="0" width="1" height="1"/><rect x="1" y="1" width="1" height="1" fill="#e4e8f2"/><rect x="4" y="0" width="1" height="1"/><rect x="5" y="1" width="1" height="1" fill="#e4e8f2"/><rect x="8" y="0" width="1" height="1"/><rect x="9" y="1" width="1" height="1" fill="#e4e8f2"/><rect x="12" y="0" width="1" height="1"/><rect x="13" y="1" width="1" height="1" fill="#e4e8f2"/><rect x="16" y="0" width="1" height="1"/><rect x="17" y="1" width="1" height="1" fill="#e4e8f2"/><rect x="2" y="2" width="1" height="1"/><rect x="3" y="3" width="1" height="1" fill="#e4e8f2"/><rect x="6" y="2" width="1" height="1"/><rect x="7" y="3" width="1" height="1" fill="#e4e8f2"/><rect x="10" y="2" width="1" height="1"/><rect x="11" y="3" width="1" height="1" fill="#e4e8f2"/><rect x="14" y="2" width="1" height="1"/><rect x="15" y="3" width="1" height="1" fill="#e4e8f2"/><rect x="0" y="4" width="1" height="1"/><rect x="1" y="5" width="1" height="1" fill="#e4e8f2"/><rect x="4" y="4" width="1" height="1"/><rect x="5" y="5" width="1" height="1" fill="#e4e8f2"/><rect x="8" y="4" width="1" height="1"/><rect x="9" y="5" width="1" height="1" fill="#e4e8f2"/><rect x="12" y="4" width="1" height="1"/><rect x="13" y="5" width="1" height="1" fill="#e4e8f2"/><rect x="16" y="4" width="1" height="1"/><rect x="17" y="5" width="1" height="1" fill="#e4e8f2"/></svg>
<svg class="a" style="left:478px;top:909px" width="18" height="6" fill="#5c6c8c"><rect x="0" y="0" width="1" height="1"/><rect x="1" y="1" width="1" height="1" fill="#e4e8f2"/><rect x="4" y="0" width="1" height="1"/><rect x="5" y="1" width="1" height="1" fill="#e4e8f2"/><rect x="8" y="0" width="1" height="1"/><rect x="9" y="1" width="1" height="1" fill="#e4e8f2"/><rect x="12" y="0" width="1" height="1"/><rect x="13" y="1" width="1" height="1" fill="#e4e8f2"/><rect x="16" y="0" width="1" height="1"/><rect x="17" y="1" width="1" height="1" fill="#e4e8f2"/><rect x="2" y="2" width="1" height="1"/><rect x="3" y="3" width="1" height="1" fill="#e4e8f2"/><rect x="6" y="2" width="1" height="1"/><rect x="7" y="3" width="1" height="1" fill="#e4e8f2"/><rect x="10" y="2" width="1" height="1"/><rect x="11" y="3" width="1" height="1" fill="#e4e8f2"/><rect x="14" y="2" width="1" height="1"/><rect x="15" y="3" width="1" height="1" fill="#e4e8f2"/><rect x="0" y="4" width="1" height="1"/><rect x="1" y="5" width="1" height="1" fill="#e4e8f2"/><rect x="4" y="4" width="1" height="1"/><rect x="5" y="5" width="1" height="1" fill="#e4e8f2"/><rect x="8" y="4" width="1" height="1"/><rect x="9" y="5" width="1" height="1" fill="#e4e8f2"/><rect x="12" y="4" width="1" height="1"/><rect x="13" y="5" width="1" height="1" fill="#e4e8f2"/><rect x="16" y="4" width="1" height="1"/><rect x="17" y="5" width="1" height="1" fill="#e4e8f2"/></svg>
<svg class="a" style="left:966px;top:575px" width="6" height="18" fill="#5c6c8c"><rect x="0" y="0" width="1" height="1"/><rect x="1" y="1" width="1" height="1" fill="#e4e8f2"/><rect x="0" y="4" width="1" height="1"/><rect x="1" y="5" width="1" height="1" fill="#e4e8f2"/><rect x="0" y="8" width="1" height="1"/><rect x="1" y="9" width="1" height="1" fill="#e4e8f2"/><rect x="0" y="12" width="1" height="1"/><rect x="1" y="13" width="1" height="1" fill="#e4e8f2"/><rect x="0" y="16" width="1" height="1"/><rect x="1" y="17" width="1" height="1" fill="#e4e8f2"/><rect x="2" y="2" width="1" height="1"/><rect x="3" y="3" width="1" height="1" fill="#e4e8f2"/><rect x="2" y="6" width="1" height="1"/><rect x="3" y="7" width="1" height="1" fill="#e4e8f2"/><rect x="2" y="10" width="1" height="1"/><rect x="3" y="11" width="1" height="1" fill="#e4e8f2"/><rect x="2" y="14" width="1" height="1"/><rect x="3" y="15" width="1" height="1" fill="#e4e8f2"/><rect x="4" y="0" width="1" height="1"/><rect x="5" y="1" width="1" height="1" fill="#e4e8f2"/><rect x="4" y="4" width="1" height="1"/><rect x="5" y="5" width="1" height="1" fill="#e4e8f2"/><rect x="4" y="8" width="1" height="1"/><rect x="5" y="9" width="1" height="1" fill="#e4e8f2"/><rect x="4" y="12" width="1" height="1"/><rect x="5" y="13" width="1" height="1" fill="#e4e8f2"/><rect x="4" y="16" width="1" height="1"/><rect x="5" y="17" width="1" height="1" fill="#e4e8f2"/></svg>
<div class="a" style="left:17px;top:249px;width:60px;height:131px;overflow:hidden;border:1px solid #a9b3c9;box-sizing:border-box;background:#fff"></div>
<div class="a" style="left:80px;top:249px;width:439px;height:131px;border:1px solid #a9b3c9;box-sizing:border-box;background:#a7c0e0"></div>
<div class="a" style="left:522px;top:249px;width:439px;height:131px;border:1px solid #a9b3c9;box-sizing:border-box;background:#a7c0e0"></div>
<div class="a" style="left:18px;top:250px;width:58px;height:22px;background:#d6dbe9;"></div>
<div class="a" style="left:18px;top:271px;width:58px;height:1px;background:#a9b3c9;"></div>
<div class="a" style="left:81px;top:250px;width:437px;height:22px;background:#d6dbe9;"></div>
<div class="a" style="left:81px;top:271px;width:437px;height:1px;background:#a9b3c9;"></div>
<div class="a" style="left:523px;top:250px;width:437px;height:22px;background:#d6dbe9;"></div>
<div class="a" style="left:523px;top:271px;width:437px;height:1px;background:#a9b3c9;"></div>
<div class="a" style="left:18px;top:272px;width:58px;height:20px;background:#f8f9fc;"></div>
<div class="a t " style="top:274px;line-height:16px;height:16px;left:18.5px;width:58px;text-align:center;color:#222;">CALLS</div>
<div class="a" style="left:81px;top:272px;width:437px;height:20px;background:#f8f9fc;"></div>
<div class="a t " style="top:274px;line-height:16px;height:16px;left:81.5px;width:53.5px;text-align:center;color:#222;">Mid</div>
<div class="a" style="left:134px;top:272px;width:1px;height:20px;background:#c5cbdb;"></div>
<div class="a t " style="top:274px;line-height:16px;height:16px;left:135px;width:54.0px;text-align:center;color:#222;">Delta</div>
<div class="a" style="left:188px;top:272px;width:1px;height:20px;background:#c5cbdb;"></div>
<div class="a t " style="top:274px;line-height:16px;height:16px;left:189px;width:54.0px;text-align:center;color:#222;">Gamma</div>
<div class="a" style="left:242px;top:272px;width:1px;height:20px;background:#c5cbdb;"></div>
<div class="a t " style="top:274px;line-height:16px;height:16px;left:243px;width:54.0px;text-align:center;color:#222;">Theta</div>
<div class="a" style="left:296px;top:272px;width:1px;height:20px;background:#c5cbdb;"></div>
<div class="a t " style="top:274px;line-height:16px;height:16px;left:297px;width:54.0px;text-align:center;color:#222;">OrigPri...</div>
<div class="a" style="left:350px;top:272px;width:1px;height:20px;background:#c5cbdb;"></div>
<div class="a t " style="top:274px;line-height:16px;height:16px;left:351px;width:54.0px;text-align:center;color:#222;">IVChg</div>
<div class="a" style="left:404px;top:272px;width:1px;height:20px;background:#c5cbdb;"></div>
<div class="a t " style="top:274px;line-height:16px;height:16px;left:405px;width:54.0px;text-align:center;color:#222;">Model</div>
<div class="a" style="left:458px;top:272px;width:1px;height:20px;background:#c5cbdb;"></div>
<div class="a t " style="top:274px;line-height:16px;height:16px;left:459px;width:59.5px;text-align:center;color:#222;">Pos</div>
<div class="a" style="left:523px;top:272px;width:437px;height:20px;background:#f8f9fc;"></div>
<div class="a t " style="top:274px;line-height:16px;height:16px;left:523.5px;width:51.5px;text-align:center;color:#222;">Mid</div>
<div class="a" style="left:574px;top:272px;width:1px;height:20px;background:#c5cbdb;"></div>
<div class="a t " style="top:274px;line-height:16px;height:16px;left:575px;width:52.0px;text-align:center;color:#222;">Delta</div>
<div class="a" style="left:626px;top:272px;width:1px;height:20px;background:#c5cbdb;"></div>
<div class="a t " style="top:274px;line-height:16px;height:16px;left:627px;width:52.0px;text-align:center;color:#222;">Gamma</div>
<div class="a" style="left:678px;top:272px;width:1px;height:20px;background:#c5cbdb;"></div>
<div class="a t " style="top:274px;line-height:16px;height:16px;left:679px;width:52.0px;text-align:center;color:#222;">Theta</div>
<div class="a" style="left:730px;top:272px;width:1px;height:20px;background:#c5cbdb;"></div>
<div class="a t " style="top:274px;line-height:16px;height:16px;left:731px;width:52.0px;text-align:center;color:#222;">OrigPr...</div>
<div class="a" style="left:782px;top:272px;width:1px;height:20px;background:#c5cbdb;"></div>
<div class="a t " style="top:274px;line-height:16px;height:16px;left:783px;width:52.0px;text-align:center;color:#222;">IVChg</div>
<div class="a" style="left:834px;top:272px;width:1px;height:20px;background:#c5cbdb;"></div>
<div class="a t " style="top:274px;line-height:16px;height:16px;left:835px;width:52.0px;text-align:center;color:#222;">Model</div>
<div class="a" style="left:886px;top:272px;width:1px;height:20px;background:#c5cbdb;"></div>
<div class="a t " style="top:274px;line-height:16px;height:16px;left:887px;width:56.0px;text-align:center;color:#222;">Pos</div>
<div class="a" style="left:942px;top:272px;width:1px;height:20px;background:#c5cbdb;"></div>
<div class="a" style="left:18px;top:292px;width:58px;height:1px;background:#c5cbdb;"></div>
<div class="a" style="left:81px;top:292px;width:437px;height:1px;background:#c5cbdb;"></div>
<div class="a" style="left:523px;top:292px;width:437px;height:1px;background:#c5cbdb;"></div>
<div class="a" style="left:944px;top:293px;width:16px;height:86px;background:#d1d7e7;"></div>
<div class="a" style="left:0;top:293px;width:961px;height:86px;overflow:hidden">
<div class="a" style="left:18px;top:0px;width:58px;height:18px;background:#fff;border-bottom:1px solid #d9dce3"></div>
<div class="a t" style="left:18px;top:1.5px;width:58px;height:16px;line-height:16px;text-align:center;color:#111">24900</div>
<div class="a" style="left:81px;top:18px;width:437px;height:1px;background:#ccd3e4"></div>
<div class="a" style="left:523px;top:18px;width:421px;height:1px;background:#ccd3e4"></div>
<div class="a t" style="left:70.5px;top:1.5px;width:60px;height:16px;line-height:16px;text-align:right;letter-spacing:.12px;color:#f20d1c">360.50</div>
<div class="a t" style="left:124.5px;top:1.5px;width:60px;height:16px;line-height:16px;text-align:right;letter-spacing:.12px;color:#111">46.86</div>
<div class="a t" style="left:178.5px;top:1.5px;width:60px;height:16px;line-height:16px;text-align:right;letter-spacing:.12px;color:#111">0.04</div>
<div class="a t" style="left:232.5px;top:1.5px;width:60px;height:16px;line-height:16px;text-align:right;letter-spacing:.12px;color:#111">-26.64</div>
<div class="a t" style="left:510.5px;top:1.5px;width:60px;height:16px;line-height:16px;text-align:right;letter-spacing:.12px;color:#f20d1c">385.75</div>
<div class="a t" style="left:562.5px;top:1.5px;width:60px;height:16px;line-height:16px;text-align:right;letter-spacing:.12px;color:#111">47.39</div>
<div class="a t" style="left:614.5px;top:1.5px;width:60px;height:16px;line-height:16px;text-align:right;letter-spacing:.12px;color:#111">0.04</div>
<div class="a t" style="left:666.5px;top:1.5px;width:60px;height:16px;line-height:16px;text-align:right;letter-spacing:.12px;color:#111">-20.71</div>
<div class="a" style="left:18px;top:19px;width:58px;height:18px;background:#fff;border-bottom:1px solid #d9dce3"></div>
<div class="a t" style="left:18px;top:20.5px;width:58px;height:16px;line-height:16px;text-align:center;color:#111">24875</div>
<div class="a" style="left:81px;top:37px;width:437px;height:1px;background:#ccd3e4"></div>
<div class="a" style="left:523px;top:37px;width:421px;height:1px;background:#ccd3e4"></div>
<div class="a" style="left:18px;top:38px;width:58px;height:18px;background:#fff;border-bottom:1px solid #d9dce3"></div>
<div class="a t" style="left:18px;top:39.5px;width:58px;height:16px;line-height:16px;text-align:center;color:#111">24850</div>
<div class="a" style="left:81px;top:56px;width:437px;height:1px;background:#ccd3e4"></div>
<div class="a" style="left:523px;top:56px;width:421px;height:1px;background:#ccd3e4"></div>
<div class="a t" style="left:70.5px;top:39.5px;width:60px;height:16px;line-height:16px;text-align:right;letter-spacing:.12px;color:#f20d1c">389.50</div>
<div class="a t" style="left:124.5px;top:39.5px;width:60px;height:16px;line-height:16px;text-align:right;letter-spacing:.12px;color:#111">48.84</div>
<div class="a t" style="left:178.5px;top:39.5px;width:60px;height:16px;line-height:16px;text-align:right;letter-spacing:.12px;color:#111">0.04</div>
<div class="a t" style="left:232.5px;top:39.5px;width:60px;height:16px;line-height:16px;text-align:right;letter-spacing:.12px;color:#111">-27.12</div>
<div class="a t" style="left:510.5px;top:39.5px;width:60px;height:16px;line-height:16px;text-align:right;letter-spacing:.12px;color:#f20d1c">415.25</div>
<div class="a t" style="left:562.5px;top:39.5px;width:60px;height:16px;line-height:16px;text-align:right;letter-spacing:.12px;color:#111">49.26</div>
<div class="a t" style="left:614.5px;top:39.5px;width:60px;height:16px;line-height:16px;text-align:right;letter-spacing:.12px;color:#111">0.04</div>
<div class="a t" style="left:666.5px;top:39.5px;width:60px;height:16px;line-height:16px;text-align:right;letter-spacing:.12px;color:#111">-21.07</div>
<div class="a" style="left:18px;top:57px;width:58px;height:18px;background:#fff;border-bottom:1px solid #d9dce3"></div>
<div class="a t" style="left:18px;top:58.5px;width:58px;height:16px;line-height:16px;text-align:center;color:#111">24825</div>
<div class="a" style="left:81px;top:75px;width:437px;height:1px;background:#ccd3e4"></div>
<div class="a" style="left:523px;top:75px;width:421px;height:1px;background:#ccd3e4"></div>
<div class="a" style="left:18px;top:76px;width:58px;height:18px;background:#fff;border-bottom:1px solid #d9dce3"></div>
<div class="a t" style="left:18px;top:77.5px;width:58px;height:16px;line-height:16px;text-align:center;color:#111">24800</div>
<div class="a" style="left:81px;top:94px;width:437px;height:1px;background:#ccd3e4"></div>
<div class="a" style="left:523px;top:94px;width:421px;height:1px;background:#ccd3e4"></div>
<div class="a t" style="left:70.5px;top:77.5px;width:60px;height:16px;line-height:16px;text-align:right;letter-spacing:.12px;color:#1f8a1f">420.00</div>
<div class="a t" style="left:124.5px;top:77.5px;width:60px;height:16px;line-height:16px;text-align:right;letter-spacing:.12px;color:#111">50.77</div>
<div class="a t" style="left:178.5px;top:77.5px;width:60px;height:16px;line-height:16px;text-align:right;letter-spacing:.12px;color:#111">0.04</div>
<div class="a t" style="left:232.5px;top:77.5px;width:60px;height:16px;line-height:16px;text-align:right;letter-spacing:.12px;color:#111">-27.58</div>
<div class="a t" style="left:510.5px;top:77.5px;width:60px;height:16px;line-height:16px;text-align:right;letter-spacing:.12px;color:#f20d1c">445.75</div>
<div class="a t" style="left:562.5px;top:77.5px;width:60px;height:16px;line-height:16px;text-align:right;letter-spacing:.12px;color:#111">51.00</div>
<div class="a t" style="left:614.5px;top:77.5px;width:60px;height:16px;line-height:16px;text-align:right;letter-spacing:.12px;color:#111">0.04</div>
<div class="a t" style="left:666.5px;top:77.5px;width:60px;height:16px;line-height:16px;text-align:right;letter-spacing:.12px;color:#111">-21.40</div>
<div class="a" style="left:134px;top:0;width:1px;height:86px;background:#ccd3e4"></div>
<div class="a" style="left:188px;top:0;width:1px;height:86px;background:#ccd3e4"></div>
<div class="a" style="left:242px;top:0;width:1px;height:86px;background:#ccd3e4"></div>
<div class="a" style="left:296px;top:0;width:1px;height:86px;background:#ccd3e4"></div>
<div class="a" style="left:350px;top:0;width:1px;height:86px;background:#ccd3e4"></div>
<div class="a" style="left:404px;top:0;width:1px;height:86px;background:#ccd3e4"></div>
<div class="a" style="left:458px;top:0;width:1px;height:86px;background:#ccd3e4"></div>
<div class="a" style="left:574px;top:0;width:1px;height:86px;background:#ccd3e4"></div>
<div class="a" style="left:626px;top:0;width:1px;height:86px;background:#ccd3e4"></div>
<div class="a" style="left:678px;top:0;width:1px;height:86px;background:#ccd3e4"></div>
<div class="a" style="left:730px;top:0;width:1px;height:86px;background:#ccd3e4"></div>
<div class="a" style="left:782px;top:0;width:1px;height:86px;background:#ccd3e4"></div>
<div class="a" style="left:834px;top:0;width:1px;height:86px;background:#ccd3e4"></div>
<div class="a" style="left:886px;top:0;width:1px;height:86px;background:#ccd3e4"></div>
<div class="a" style="left:943px;top:0;width:1px;height:86px;background:#ccd3e4"></div>
</div>
<svg class="a" style="left:28px;top:251px" width="36" height="17"><defs><linearGradient id="ga" x1="0" y1="0" x2="1" y2="1"><stop offset="0" stop-color="#e4f0ff"/><stop offset="1" stop-color="#5a9aea"/></linearGradient></defs><path d="M12.5 1.5 V14.5 L1.5 8 Z M21.5 1.5 V14.5 L32.5 8 Z" fill="url(#ga)" stroke="#4a85dc" stroke-width="1"/></svg>
<div class="a t b" style="top:252.5px;line-height:16px;height:16px;left:86px;color:#111;">Weekly</div>
<div class="a t b" style="top:252.5px;line-height:16px;height:16px;left:159px;width:200px;text-align:right;color:#111;">feb. 26 (8)&nbsp; QNE.G26</div>
<div class="a t b" style="top:252.5px;line-height:16px;height:16px;left:434px;width:80px;text-align:right;color:#111;letter-spacing:.7px;">26.91%</div>
<div class="a" style="left:527px;top:252px;width:60px;height:17px;overflow:hidden"><div class="a t b" style="left:-2.5px;top:0.5px;line-height:16px">Weekly</div></div>
<div class="a t b" style="top:252.5px;line-height:16px;height:16px;left:608px;width:200px;text-align:right;color:#111;">mar. 26 (11)&nbsp; Q1A.H26</div>
<div class="a t b" style="top:252.5px;line-height:16px;height:16px;left:879px;width:80px;text-align:right;color:#111;letter-spacing:.7px;">24.46%</div>
<svg class="a" style="left:946px;top:298px" width="10" height="6"><path d="M0.5 5.5 L5 0.8 L9.5 5.5 Z" fill="#6f7a92"/></svg>
<div class="a" style="left:947px;top:325px;width:9px;height:17px;background:#9ca7b8;"></div>
<svg class="a" style="left:946px;top:368px" width="10" height="6"><path d="M0.5 0.5 H9.5 L5 5.2 Z" fill="#6f7a92"/></svg>
<div class="a" style="left:17px;top:392px;width:60px;height:513px;overflow:hidden;border:1px solid #a9b3c9;box-sizing:border-box;background:#fff"></div>
<div class="a" style="left:80px;top:392px;width:439px;height:513px;border:1px solid #a9b3c9;box-sizing:border-box;background:#a7c0e0"></div>
<div class="a" style="left:522px;top:392px;width:439px;height:513px;border:1px solid #a9b3c9;box-sizing:border-box;background:#a7c0e0"></div>
<div class="a" style="left:18px;top:393px;width:58px;height:20px;background:#f8f9fc;"></div>
<div class="a t " style="top:395px;line-height:16px;height:16px;left:18.5px;width:58px;text-align:center;color:#222;">PUTS</div>
<div class="a" style="left:81px;top:393px;width:437px;height:20px;background:#f8f9fc;"></div>
<div class="a t " style="top:395px;line-height:16px;height:16px;left:81.5px;width:53.5px;text-align:center;color:#222;">Mid</div>
<div class="a" style="left:134px;top:393px;width:1px;height:20px;background:#c5cbdb;"></div>
<div class="a t " style="top:395px;line-height:16px;height:16px;left:135px;width:54.0px;text-align:center;color:#222;">Delta</div>
<div class="a" style="left:188px;top:393px;width:1px;height:20px;background:#c5cbdb;"></div>
<div class="a t " style="top:395px;line-height:16px;height:16px;left:189px;width:54.0px;text-align:center;color:#222;">Gamma</div>
<div class="a" style="left:242px;top:393px;width:1px;height:20px;background:#c5cbdb;"></div>
<div class="a t " style="top:395px;line-height:16px;height:16px;left:243px;width:54.0px;text-align:center;color:#222;">Theta</div>
<div class="a" style="left:296px;top:393px;width:1px;height:20px;background:#c5cbdb;"></div>
<div class="a t " style="top:395px;line-height:16px;height:16px;left:297px;width:54.0px;text-align:center;color:#222;">OrigPri...</div>
<div class="a" style="left:350px;top:393px;width:1px;height:20px;background:#c5cbdb;"></div>
<div class="a t " style="top:395px;line-height:16px;height:16px;left:351px;width:54.0px;text-align:center;color:#222;">IVChg</div>
<div class="a" style="left:404px;top:393px;width:1px;height:20px;background:#c5cbdb;"></div>
<div class="a t " style="top:395px;line-height:16px;height:16px;left:405px;width:54.0px;text-align:center;color:#222;">Model</div>
<div class="a" style="left:458px;top:393px;width:1px;height:20px;background:#c5cbdb;"></div>
<div class="a t " style="top:395px;line-height:16px;height:16px;left:459px;width:59.5px;text-align:center;color:#222;">Pos</div>
<div class="a" style="left:523px;top:393px;width:437px;height:20px;background:#f8f9fc;"></div>
<div class="a t " style="top:395px;line-height:16px;height:16px;left:523.5px;width:51.5px;text-align:center;color:#222;">Mid</div>
<div class="a" style="left:574px;top:393px;width:1px;height:20px;background:#c5cbdb;"></div>
<div class="a t " style="top:395px;line-height:16px;height:16px;left:575px;width:52.0px;text-align:center;color:#222;">Delta</div>
<div class="a" style="left:626px;top:393px;width:1px;height:20px;background:#c5cbdb;"></div>
<div class="a t " style="top:395px;line-height:16px;height:16px;left:627px;width:52.0px;text-align:center;color:#222;">Gamma</div>
<div class="a" style="left:678px;top:393px;width:1px;height:20px;background:#c5cbdb;"></div>
<div class="a t " style="top:395px;line-height:16px;height:16px;left:679px;width:52.0px;text-align:center;color:#222;">Theta</div>
<div class="a" style="left:730px;top:393px;width:1px;height:20px;background:#c5cbdb;"></div>
<div class="a t " style="top:395px;line-height:16px;height:16px;left:731px;width:52.0px;text-align:center;color:#222;">OrigPr...</div>
<div class="a" style="left:782px;top:393px;width:1px;height:20px;background:#c5cbdb;"></div>
<div class="a t " style="top:395px;line-height:16px;height:16px;left:783px;width:52.0px;text-align:center;color:#222;">IVChg</div>
<div class="a" style="left:834px;top:393px;width:1px;height:20px;background:#c5cbdb;"></div>
<div class="a t " style="top:395px;line-height:16px;height:16px;left:835px;width:52.0px;text-align:center;color:#222;">Model</div>
<div class="a" style="left:886px;top:393px;width:1px;height:20px;background:#c5cbdb;"></div>
<div class="a t " style="top:395px;line-height:16px;height:16px;left:887px;width:56.0px;text-align:center;color:#222;">Pos</div>
<div class="a" style="left:942px;top:393px;width:1px;height:20px;background:#c5cbdb;"></div>
<div class="a" style="left:18px;top:413px;width:58px;height:1px;background:#c5cbdb;"></div>
<div class="a" style="left:81px;top:413px;width:437px;height:1px;background:#c5cbdb;"></div>
<div class="a" style="left:523px;top:413px;width:437px;height:1px;background:#c5cbdb;"></div>
<div class="a" style="left:944px;top:414px;width:16px;height:490px;background:#d1d7e7;"></div>
<div class="a" style="left:0;top:414px;width:961px;height:490px;overflow:hidden">
<div class="a" style="left:18px;top:0px;width:58px;height:18px;background:#ececec;border-bottom:1px solid #d9dce3"></div>
<div class="a t" style="left:18px;top:1.5px;width:58px;height:16px;line-height:16px;text-align:center;color:#111">25075</div>
<div class="a" style="left:81px;top:18px;width:437px;height:1px;background:#ccd3e4"></div>
<div class="a" style="left:523px;top:18px;width:421px;height:1px;background:#ccd3e4"></div>
<div class="a" style="left:18px;top:19px;width:58px;height:18px;background:#ececec;border-bottom:1px solid #d9dce3"></div>
<div class="a t" style="left:18px;top:20.5px;width:58px;height:16px;line-height:16px;text-align:center;color:#111">25050</div>
<div class="a" style="left:81px;top:37px;width:437px;height:1px;background:#ccd3e4"></div>
<div class="a" style="left:523px;top:37px;width:421px;height:1px;background:#ccd3e4"></div>
<div class="a t" style="left:70.5px;top:20.5px;width:60px;height:16px;line-height:16px;text-align:right;letter-spacing:.12px;color:#1f8a1f">475.50</div>
<div class="a t" style="left:124.5px;top:20.5px;width:60px;height:16px;line-height:16px;text-align:right;letter-spacing:.12px;color:#111">-61.16</div>
<div class="a t" style="left:178.5px;top:20.5px;width:60px;height:16px;line-height:16px;text-align:right;letter-spacing:.12px;color:#111">0.05</div>
<div class="a t" style="left:232.5px;top:20.5px;width:60px;height:16px;line-height:16px;text-align:right;letter-spacing:.12px;color:#111">-18.39</div>
<div class="a t" style="left:510.5px;top:20.5px;width:60px;height:16px;line-height:16px;text-align:right;letter-spacing:.12px;color:#1f8a1f">501.00</div>
<div class="a t" style="left:562.5px;top:20.5px;width:60px;height:16px;line-height:16px;text-align:right;letter-spacing:.12px;color:#111">-59.78</div>
<div class="a t" style="left:614.5px;top:20.5px;width:60px;height:16px;line-height:16px;text-align:right;letter-spacing:.12px;color:#111">0.04</div>
<div class="a t" style="left:666.5px;top:20.5px;width:60px;height:16px;line-height:16px;text-align:right;letter-spacing:.12px;color:#111">-14.49</div>
<div class="a" style="left:18px;top:38px;width:58px;height:18px;background:#ececec;border-bottom:1px solid #d9dce3"></div>
<div class="a t" style="left:18px;top:39.5px;width:58px;height:16px;line-height:16px;text-align:center;color:#111">25025</div>
<div class="a" style="left:81px;top:56px;width:437px;height:1px;background:#ccd3e4"></div>
<div class="a" style="left:523px;top:56px;width:421px;height:1px;background:#ccd3e4"></div>
<div class="a" style="left:18px;top:57px;width:58px;height:18px;background:#ececec;border-bottom:1px solid #d9dce3"></div>
<div class="a t" style="left:18px;top:58.5px;width:58px;height:16px;line-height:16px;text-align:center;color:#111">25000</div>
<div class="a" style="left:81px;top:75px;width:437px;height:1px;background:#ccd3e4"></div>
<div class="a" style="left:523px;top:75px;width:421px;height:1px;background:#ccd3e4"></div>
<div class="a t" style="left:70.5px;top:58.5px;width:60px;height:16px;line-height:16px;text-align:right;letter-spacing:.12px;color:#1f8a1f">451.50</div>
<div class="a t" style="left:124.5px;top:58.5px;width:60px;height:16px;line-height:16px;text-align:right;letter-spacing:.12px;color:#111">-58.67</div>
<div class="a t" style="left:178.5px;top:58.5px;width:60px;height:16px;line-height:16px;text-align:right;letter-spacing:.12px;color:#111">0.05</div>
<div class="a t" style="left:232.5px;top:58.5px;width:60px;height:16px;line-height:16px;text-align:right;letter-spacing:.12px;color:#111">-19.20</div>
<div class="a t" style="left:510.5px;top:58.5px;width:60px;height:16px;line-height:16px;text-align:right;letter-spacing:.12px;color:#1f8a1f">477.00</div>
<div class="a t" style="left:562.5px;top:58.5px;width:60px;height:16px;line-height:16px;text-align:right;letter-spacing:.12px;color:#111">-57.52</div>
<div class="a t" style="left:614.5px;top:58.5px;width:60px;height:16px;line-height:16px;text-align:right;letter-spacing:.12px;color:#111">0.04</div>
<div class="a t" style="left:666.5px;top:58.5px;width:60px;height:16px;line-height:16px;text-align:right;letter-spacing:.12px;color:#111">-15.03</div>
<div class="a" style="left:18px;top:76px;width:58px;height:18px;background:#ececec;border-bottom:1px solid #d9dce3"></div>
<div class="a t" style="left:18px;top:77.5px;width:58px;height:16px;line-height:16px;text-align:center;color:#111">24975</div>
<div class="a" style="left:81px;top:94px;width:437px;height:1px;background:#ccd3e4"></div>
<div class="a" style="left:523px;top:94px;width:421px;height:1px;background:#ccd3e4"></div>
<div class="a" style="left:18px;top:95px;width:58px;height:18px;background:#ececec;border-bottom:1px solid #d9dce3"></div>
<div class="a t" style="left:18px;top:96.5px;width:58px;height:16px;line-height:16px;text-align:center;color:#111">24950</div>
<div class="a" style="left:81px;top:113px;width:437px;height:1px;background:#ccd3e4"></div>
<div class="a" style="left:523px;top:113px;width:421px;height:1px;background:#ccd3e4"></div>
<div class="a t" style="left:70.5px;top:96.5px;width:60px;height:16px;line-height:16px;text-align:right;letter-spacing:.12px;color:#f20d1c">429.00</div>
<div class="a t" style="left:124.5px;top:96.5px;width:60px;height:16px;line-height:16px;text-align:right;letter-spacing:.12px;color:#111">-56.23</div>
<div class="a t" style="left:178.5px;top:96.5px;width:60px;height:16px;line-height:16px;text-align:right;letter-spacing:.12px;color:#111">0.05</div>
<div class="a t" style="left:232.5px;top:96.5px;width:60px;height:16px;line-height:16px;text-align:right;letter-spacing:.12px;color:#111">-19.94</div>
<div class="a t" style="left:510.5px;top:96.5px;width:60px;height:16px;line-height:16px;text-align:right;letter-spacing:.12px;color:#1f8a1f">454.50</div>
<div class="a t" style="left:562.5px;top:96.5px;width:60px;height:16px;line-height:16px;text-align:right;letter-spacing:.12px;color:#111">-55.30</div>
<div class="a t" style="left:614.5px;top:96.5px;width:60px;height:16px;line-height:16px;text-align:right;letter-spacing:.12px;color:#111">0.04</div>
<div class="a t" style="left:666.5px;top:96.5px;width:60px;height:16px;line-height:16px;text-align:right;letter-spacing:.12px;color:#111">-15.54</div>
<div class="a" style="left:18px;top:114px;width:58px;height:18px;background:#ececec;border-bottom:1px solid #d9dce3"></div>
<div class="a t" style="left:18px;top:115.5px;width:58px;height:16px;line-height:16px;text-align:center;color:#111">24925</div>
<div class="a" style="left:81px;top:132px;width:437px;height:1px;background:#ccd3e4"></div>
<div class="a" style="left:523px;top:132px;width:421px;height:1px;background:#ccd3e4"></div>
<div class="a" style="left:18px;top:133px;width:58px;height:18px;background:#ececec;border-bottom:1px solid #d9dce3"></div>
<div class="a t" style="left:18px;top:134.5px;width:58px;height:16px;line-height:16px;text-align:center;color:#111">24900</div>
<div class="a" style="left:81px;top:151px;width:437px;height:1px;background:#ccd3e4"></div>
<div class="a" style="left:523px;top:151px;width:421px;height:1px;background:#ccd3e4"></div>
<div class="a t" style="left:70.5px;top:134.5px;width:60px;height:16px;line-height:16px;text-align:right;letter-spacing:.12px;color:#1f8a1f">407.50</div>
<div class="a t" style="left:124.5px;top:134.5px;width:60px;height:16px;line-height:16px;text-align:right;letter-spacing:.12px;color:#111">-53.87</div>
<div class="a t" style="left:178.5px;top:134.5px;width:60px;height:16px;line-height:16px;text-align:right;letter-spacing:.12px;color:#111">0.04</div>
<div class="a t" style="left:232.5px;top:134.5px;width:60px;height:16px;line-height:16px;text-align:right;letter-spacing:.12px;color:#111">-20.59</div>
<div class="a t" style="left:510.5px;top:134.5px;width:60px;height:16px;line-height:16px;text-align:right;letter-spacing:.12px;color:#f20d1c">433.25</div>
<div class="a t" style="left:562.5px;top:134.5px;width:60px;height:16px;line-height:16px;text-align:right;letter-spacing:.12px;color:#111">-53.13</div>
<div class="a t" style="left:614.5px;top:134.5px;width:60px;height:16px;line-height:16px;text-align:right;letter-spacing:.12px;color:#111">0.04</div>
<div class="a t" style="left:666.5px;top:134.5px;width:60px;height:16px;line-height:16px;text-align:right;letter-spacing:.12px;color:#111">-15.99</div>
<div class="a" style="left:18px;top:152px;width:58px;height:18px;background:#ececec;border-bottom:1px solid #d9dce3"></div>
<div class="a t" style="left:18px;top:153.5px;width:58px;height:16px;line-height:16px;text-align:center;color:#111">24875</div>
<div class="a" style="left:81px;top:170px;width:437px;height:1px;background:#ccd3e4"></div>
<div class="a" style="left:523px;top:170px;width:421px;height:1px;background:#ccd3e4"></div>
<div class="a" style="left:18px;top:171px;width:58px;height:18px;background:#ececec;border-bottom:1px solid #d9dce3"></div>
<div class="a t" style="left:18px;top:172.5px;width:58px;height:16px;line-height:16px;text-align:center;color:#111">24850</div>
<div class="a" style="left:81px;top:189px;width:437px;height:1px;background:#ccd3e4"></div>
<div class="a" style="left:523px;top:189px;width:421px;height:1px;background:#ccd3e4"></div>
<div class="a t" style="left:70.5px;top:172.5px;width:60px;height:16px;line-height:16px;text-align:right;letter-spacing:.12px;color:#1f8a1f">387.25</div>
<div class="a t" style="left:124.5px;top:172.5px;width:60px;height:16px;line-height:16px;text-align:right;letter-spacing:.12px;color:#111">-51.57</div>
<div class="a t" style="left:178.5px;top:172.5px;width:60px;height:16px;line-height:16px;text-align:right;letter-spacing:.12px;color:#111">0.04</div>
<div class="a t" style="left:232.5px;top:172.5px;width:60px;height:16px;line-height:16px;text-align:right;letter-spacing:.12px;color:#111">-21.16</div>
<div class="a t" style="left:510.5px;top:172.5px;width:60px;height:16px;line-height:16px;text-align:right;letter-spacing:.12px;color:#f20d1c">412.75</div>
<div class="a t" style="left:562.5px;top:172.5px;width:60px;height:16px;line-height:16px;text-align:right;letter-spacing:.12px;color:#111">-51.03</div>
<div class="a t" style="left:614.5px;top:172.5px;width:60px;height:16px;line-height:16px;text-align:right;letter-spacing:.12px;color:#111">0.04</div>
<div class="a t" style="left:666.5px;top:172.5px;width:60px;height:16px;line-height:16px;text-align:right;letter-spacing:.12px;color:#111">-16.38</div>
<div class="a" style="left:18px;top:190px;width:58px;height:18px;background:#ececec;border-bottom:1px solid #d9dce3"></div>
<div class="a t" style="left:18px;top:191.5px;width:58px;height:16px;line-height:16px;text-align:center;color:#111">24825</div>
<div class="a" style="left:81px;top:208px;width:437px;height:1px;background:#ccd3e4"></div>
<div class="a" style="left:523px;top:208px;width:421px;height:1px;background:#ccd3e4"></div>
<div class="a" style="left:18px;top:209px;width:58px;height:18px;background:#ececec;border-bottom:1px solid #d9dce3"></div>
<div class="a t" style="left:18px;top:210.5px;width:58px;height:16px;line-height:16px;text-align:center;color:#111">24800</div>
<div class="a" style="left:81px;top:227px;width:437px;height:1px;background:#ccd3e4"></div>
<div class="a" style="left:523px;top:227px;width:421px;height:1px;background:#ccd3e4"></div>
<div class="a t" style="left:70.5px;top:210.5px;width:60px;height:16px;line-height:16px;text-align:right;letter-spacing:.12px;color:#1f8a1f">367.25</div>
<div class="a t" style="left:124.5px;top:210.5px;width:60px;height:16px;line-height:16px;text-align:right;letter-spacing:.12px;color:#111">-49.35</div>
<div class="a t" style="left:178.5px;top:210.5px;width:60px;height:16px;line-height:16px;text-align:right;letter-spacing:.12px;color:#111">0.04</div>
<div class="a t" style="left:232.5px;top:210.5px;width:60px;height:16px;line-height:16px;text-align:right;letter-spacing:.12px;color:#111">-21.60</div>
<div class="a t" style="left:510.5px;top:210.5px;width:60px;height:16px;line-height:16px;text-align:right;letter-spacing:.12px;color:#1f8a1f">393.25</div>
<div class="a t" style="left:562.5px;top:210.5px;width:60px;height:16px;line-height:16px;text-align:right;letter-spacing:.12px;color:#111">-48.98</div>
<div class="a t" style="left:614.5px;top:210.5px;width:60px;height:16px;line-height:16px;text-align:right;letter-spacing:.12px;color:#111">0.04</div>
<div class="a t" style="left:666.5px;top:210.5px;width:60px;height:16px;line-height:16px;text-align:right;letter-spacing:.12px;color:#111">-16.72</div>
<div class="a" style="left:18px;top:228px;width:58px;height:18px;background:#fff;border-bottom:1px solid #d9dce3"></div>
<div class="a t" style="left:18px;top:229.5px;width:58px;height:16px;line-height:16px;text-align:center;color:#f20d1c">24775</div>
<div class="a" style="left:81px;top:246px;width:437px;height:1px;background:#ccd3e4"></div>
<div class="a" style="left:523px;top:246px;width:421px;height:1px;background:#ccd3e4"></div>
<div class="a" style="left:18px;top:247px;width:58px;height:18px;background:#fff;border-bottom:1px solid #d9dce3"></div>
<div class="a t" style="left:18px;top:248.5px;width:58px;height:16px;line-height:16px;text-align:center;color:#111">24750</div>
<div class="a" style="left:81px;top:265px;width:437px;height:1px;background:#ccd3e4"></div>
<div class="a" style="left:523px;top:265px;width:421px;height:1px;background:#ccd3e4"></div>
<div class="a t" style="left:70.5px;top:248.5px;width:60px;height:16px;line-height:16px;text-align:right;letter-spacing:.12px;color:#1f8a1f">348.75</div>
<div class="a t" style="left:124.5px;top:248.5px;width:60px;height:16px;line-height:16px;text-align:right;letter-spacing:.12px;color:#111">-47.21</div>
<div class="a t" style="left:178.5px;top:248.5px;width:60px;height:16px;line-height:16px;text-align:right;letter-spacing:.12px;color:#111">0.04</div>
<div class="a t" style="left:232.5px;top:248.5px;width:60px;height:16px;line-height:16px;text-align:right;letter-spacing:.12px;color:#111">-22.01</div>
<div class="a t" style="left:510.5px;top:248.5px;width:60px;height:16px;line-height:16px;text-align:right;letter-spacing:.12px;color:#1f8a1f">374.25</div>
<div class="a t" style="left:562.5px;top:248.5px;width:60px;height:16px;line-height:16px;text-align:right;letter-spacing:.12px;color:#111">-46.99</div>
<div class="a t" style="left:614.5px;top:248.5px;width:60px;height:16px;line-height:16px;text-align:right;letter-spacing:.12px;color:#111">0.04</div>
<div class="a t" style="left:666.5px;top:248.5px;width:60px;height:16px;line-height:16px;text-align:right;letter-spacing:.12px;color:#111">-16.99</div>
<div class="a" style="left:18px;top:266px;width:58px;height:18px;background:#fff;border-bottom:1px solid #d9dce3"></div>
<div class="a t" style="left:18px;top:267.5px;width:58px;height:16px;line-height:16px;text-align:center;color:#111">24725</div>
<div class="a" style="left:81px;top:284px;width:437px;height:1px;background:#ccd3e4"></div>
<div class="a" style="left:523px;top:284px;width:421px;height:1px;background:#ccd3e4"></div>
<div class="a" style="left:18px;top:285px;width:58px;height:18px;background:#fff;border-bottom:1px solid #d9dce3"></div>
<div class="a t" style="left:18px;top:286.5px;width:58px;height:16px;line-height:16px;text-align:center;color:#111">24700</div>
<div class="a" style="left:81px;top:303px;width:437px;height:1px;background:#ccd3e4"></div>
<div class="a" style="left:523px;top:303px;width:421px;height:1px;background:#ccd3e4"></div>
<div class="a t" style="left:70.5px;top:286.5px;width:60px;height:16px;line-height:16px;text-align:right;letter-spacing:.12px;color:#1f8a1f">330.50</div>
<div class="a t" style="left:124.5px;top:286.5px;width:60px;height:16px;line-height:16px;text-align:right;letter-spacing:.12px;color:#111">-45.13</div>
<div class="a t" style="left:178.5px;top:286.5px;width:60px;height:16px;line-height:16px;text-align:right;letter-spacing:.12px;color:#111">0.04</div>
<div class="a t" style="left:232.5px;top:286.5px;width:60px;height:16px;line-height:16px;text-align:right;letter-spacing:.12px;color:#111">-22.29</div>
<div class="a t" style="left:510.5px;top:286.5px;width:60px;height:16px;line-height:16px;text-align:right;letter-spacing:.12px;color:#1f8a1f">357.00</div>
<div class="a t" style="left:562.5px;top:286.5px;width:60px;height:16px;line-height:16px;text-align:right;letter-spacing:.12px;color:#111">-45.07</div>
<div class="a t" style="left:614.5px;top:286.5px;width:60px;height:16px;line-height:16px;text-align:right;letter-spacing:.12px;color:#111">0.04</div>
<div class="a t" style="left:666.5px;top:286.5px;width:60px;height:16px;line-height:16px;text-align:right;letter-spacing:.12px;color:#111">-17.25</div>
<div class="a" style="left:18px;top:304px;width:58px;height:18px;background:#fff;border-bottom:1px solid #d9dce3"></div>
<div class="a t" style="left:18px;top:305.5px;width:58px;height:16px;line-height:16px;text-align:center;color:#111">24675</div>
<div class="a" style="left:81px;top:322px;width:437px;height:1px;background:#ccd3e4"></div>
<div class="a" style="left:523px;top:322px;width:421px;height:1px;background:#ccd3e4"></div>
<div class="a" style="left:18px;top:323px;width:58px;height:18px;background:#fff;border-bottom:1px solid #d9dce3"></div>
<div class="a t" style="left:18px;top:324.5px;width:58px;height:16px;line-height:16px;text-align:center;color:#111">24650</div>
<div class="a" style="left:81px;top:341px;width:437px;height:1px;background:#ccd3e4"></div>
<div class="a" style="left:523px;top:341px;width:421px;height:1px;background:#ccd3e4"></div>
<div class="a t" style="left:70.5px;top:324.5px;width:60px;height:16px;line-height:16px;text-align:right;letter-spacing:.12px;color:#1f8a1f">313.50</div>
<div class="a t" style="left:124.5px;top:324.5px;width:60px;height:16px;line-height:16px;text-align:right;letter-spacing:.12px;color:#111">-43.12</div>
<div class="a t" style="left:178.5px;top:324.5px;width:60px;height:16px;line-height:16px;text-align:right;letter-spacing:.12px;color:#111">0.04</div>
<div class="a t" style="left:232.5px;top:324.5px;width:60px;height:16px;line-height:16px;text-align:right;letter-spacing:.12px;color:#111">-22.53</div>
<div class="a t" style="left:510.5px;top:324.5px;width:60px;height:16px;line-height:16px;text-align:right;letter-spacing:.12px;color:#1f8a1f">339.50</div>
<div class="a t" style="left:562.5px;top:324.5px;width:60px;height:16px;line-height:16px;text-align:right;letter-spacing:.12px;color:#111">-43.21</div>
<div class="a t" style="left:614.5px;top:324.5px;width:60px;height:16px;line-height:16px;text-align:right;letter-spacing:.12px;color:#111">0.04</div>
<div class="a t" style="left:666.5px;top:324.5px;width:60px;height:16px;line-height:16px;text-align:right;letter-spacing:.12px;color:#111">-17.42</div>
<div class="a" style="left:18px;top:342px;width:58px;height:18px;background:#fff;border-bottom:1px solid #d9dce3"></div>
<div class="a t" style="left:18px;top:343.5px;width:58px;height:16px;line-height:16px;text-align:center;color:#111">24625</div>
<div class="a" style="left:81px;top:360px;width:437px;height:1px;background:#ccd3e4"></div>
<div class="a" style="left:523px;top:360px;width:421px;height:1px;background:#ccd3e4"></div>
<div class="a" style="left:18px;top:361px;width:58px;height:18px;background:#fff;border-bottom:1px solid #d9dce3"></div>
<div class="a t" style="left:18px;top:362.5px;width:58px;height:16px;line-height:16px;text-align:center;color:#111">24600</div>
<div class="a" style="left:81px;top:379px;width:437px;height:1px;background:#ccd3e4"></div>
<div class="a" style="left:523px;top:379px;width:421px;height:1px;background:#ccd3e4"></div>
<div class="a t" style="left:70.5px;top:362.5px;width:60px;height:16px;line-height:16px;text-align:right;letter-spacing:.12px;color:#1f8a1f">297.00</div>
<div class="a t" style="left:124.5px;top:362.5px;width:60px;height:16px;line-height:16px;text-align:right;letter-spacing:.12px;color:#111">-41.18</div>
<div class="a t" style="left:178.5px;top:362.5px;width:60px;height:16px;line-height:16px;text-align:right;letter-spacing:.12px;color:#111">0.04</div>
<div class="a t" style="left:232.5px;top:362.5px;width:60px;height:16px;line-height:16px;text-align:right;letter-spacing:.12px;color:#111">-22.68</div>
<div class="a t" style="left:510.5px;top:362.5px;width:60px;height:16px;line-height:16px;text-align:right;letter-spacing:.12px;color:#1f8a1f">323.25</div>
<div class="a t" style="left:562.5px;top:362.5px;width:60px;height:16px;line-height:16px;text-align:right;letter-spacing:.12px;color:#111">-41.40</div>
<div class="a t" style="left:614.5px;top:362.5px;width:60px;height:16px;line-height:16px;text-align:right;letter-spacing:.12px;color:#111">0.04</div>
<div class="a t" style="left:666.5px;top:362.5px;width:60px;height:16px;line-height:16px;text-align:right;letter-spacing:.12px;color:#111">-17.56</div>
<div class="a" style="left:18px;top:380px;width:58px;height:18px;background:#fff;border-bottom:1px solid #d9dce3"></div>
<div class="a t" style="left:18px;top:381.5px;width:58px;height:16px;line-height:16px;text-align:center;color:#111">24575</div>
<div class="a" style="left:81px;top:398px;width:437px;height:1px;background:#ccd3e4"></div>
<div class="a" style="left:523px;top:398px;width:421px;height:1px;background:#ccd3e4"></div>
<div class="a" style="left:18px;top:399px;width:58px;height:18px;background:#fff;border-bottom:1px solid #d9dce3"></div>
<div class="a t" style="left:18px;top:400.5px;width:58px;height:16px;line-height:16px;text-align:center;color:#111">24550</div>
<div class="a" style="left:81px;top:417px;width:437px;height:1px;background:#ccd3e4"></div>
<div class="a" style="left:523px;top:417px;width:421px;height:1px;background:#ccd3e4"></div>
<div class="a t" style="left:70.5px;top:400.5px;width:60px;height:16px;line-height:16px;text-align:right;letter-spacing:.12px;color:#1f8a1f">281.50</div>
<div class="a t" style="left:124.5px;top:400.5px;width:60px;height:16px;line-height:16px;text-align:right;letter-spacing:.12px;color:#111">-39.30</div>
<div class="a t" style="left:178.5px;top:400.5px;width:60px;height:16px;line-height:16px;text-align:right;letter-spacing:.12px;color:#111">0.04</div>
<div class="a t" style="left:232.5px;top:400.5px;width:60px;height:16px;line-height:16px;text-align:right;letter-spacing:.12px;color:#111">-22.78</div>
<div class="a t" style="left:286.5px;top:400.5px;width:60px;height:16px;line-height:16px;text-align:right;letter-spacing:.12px;color:#111">499.48</div>
<div class="a t" style="left:340.5px;top:400.5px;width:60px;height:16px;line-height:16px;text-align:right;letter-spacing:.12px;color:#111">-2.94</div>
<div class="a t" style="left:394.5px;top:400.5px;width:60px;height:16px;line-height:16px;text-align:right;letter-spacing:.12px;color:#111">-1</div>
<div class="a t" style="left:454px;top:400.5px;width:60px;height:16px;line-height:16px;text-align:right;letter-spacing:.12px;color:#111">-1</div>
<div class="a t" style="left:510.5px;top:400.5px;width:60px;height:16px;line-height:16px;text-align:right;letter-spacing:.12px;color:#1f8a1f">308.00</div>
<div class="a t" style="left:562.5px;top:400.5px;width:60px;height:16px;line-height:16px;text-align:right;letter-spacing:.12px;color:#111">-39.67</div>
<div class="a t" style="left:614.5px;top:400.5px;width:60px;height:16px;line-height:16px;text-align:right;letter-spacing:.12px;color:#111">0.04</div>
<div class="a t" style="left:666.5px;top:400.5px;width:60px;height:16px;line-height:16px;text-align:right;letter-spacing:.12px;color:#111">-17.67</div>
<div class="a" style="left:18px;top:418px;width:58px;height:18px;background:#fff;border-bottom:1px solid #d9dce3"></div>
<div class="a t" style="left:18px;top:419.5px;width:58px;height:16px;line-height:16px;text-align:center;color:#111">24525</div>
<div class="a" style="left:81px;top:436px;width:437px;height:1px;background:#ccd3e4"></div>
<div class="a" style="left:523px;top:436px;width:421px;height:1px;background:#ccd3e4"></div>
<div class="a" style="left:18px;top:437px;width:58px;height:18px;background:#fff;border-bottom:1px solid #d9dce3"></div>
<div class="a t" style="left:18px;top:438.5px;width:58px;height:16px;line-height:16px;text-align:center;color:#111">24500</div>
<div class="a" style="left:81px;top:455px;width:437px;height:1px;background:#ccd3e4"></div>
<div class="a" style="left:523px;top:455px;width:421px;height:1px;background:#ccd3e4"></div>
<div class="a t" style="left:70.5px;top:438.5px;width:60px;height:16px;line-height:16px;text-align:right;letter-spacing:.12px;color:#1f8a1f">266.50</div>
<div class="a t" style="left:124.5px;top:438.5px;width:60px;height:16px;line-height:16px;text-align:right;letter-spacing:.12px;color:#111">-37.50</div>
<div class="a t" style="left:178.5px;top:438.5px;width:60px;height:16px;line-height:16px;text-align:right;letter-spacing:.12px;color:#111">0.04</div>
<div class="a t" style="left:232.5px;top:438.5px;width:60px;height:16px;line-height:16px;text-align:right;letter-spacing:.12px;color:#111">-22.81</div>
<div class="a t" style="left:286.5px;top:438.5px;width:60px;height:16px;line-height:16px;text-align:right;letter-spacing:.12px;color:#111">460.75</div>
<div class="a t" style="left:340.5px;top:438.5px;width:60px;height:16px;line-height:16px;text-align:right;letter-spacing:.12px;color:#111">2.78</div>
<div class="a t" style="left:394.5px;top:438.5px;width:60px;height:16px;line-height:16px;text-align:right;letter-spacing:.12px;color:#111">+1</div>
<div class="a t" style="left:454px;top:438.5px;width:60px;height:16px;line-height:16px;text-align:right;letter-spacing:.12px;color:#111">-1</div>
<div class="a t" style="left:510.5px;top:438.5px;width:60px;height:16px;line-height:16px;text-align:right;letter-spacing:.12px;color:#1f8a1f">292.75</div>
<div class="a t" style="left:562.5px;top:438.5px;width:60px;height:16px;line-height:16px;text-align:right;letter-spacing:.12px;color:#111">-37.98</div>
<div class="a t" style="left:614.5px;top:438.5px;width:60px;height:16px;line-height:16px;text-align:right;letter-spacing:.12px;color:#111">0.04</div>
<div class="a t" style="left:666.5px;top:438.5px;width:60px;height:16px;line-height:16px;text-align:right;letter-spacing:.12px;color:#111">-17.70</div>
<div class="a" style="left:18px;top:456px;width:58px;height:18px;background:#fffdf0;border-bottom:1px solid #d9dce3"></div>
<div class="a t" style="left:18px;top:457.5px;width:58px;height:16px;line-height:16px;text-align:center;color:#111">24475</div>
<div class="a" style="left:81px;top:456px;width:437px;height:18px;background:#fffdf0"></div>
<div class="a" style="left:523px;top:456px;width:421px;height:18px;background:#fffdf0"></div>
<div class="a" style="left:406px;top:457px;width:51px;height:16px;background:#fdf1b6"></div>
<div class="a" style="left:454px;top:458.5px;width:1px;height:13px;background:#111"></div>
<div class="a" style="left:81px;top:474px;width:437px;height:1px;background:#ccd3e4"></div>
<div class="a" style="left:523px;top:474px;width:421px;height:1px;background:#ccd3e4"></div>
<div class="a" style="left:18px;top:475px;width:58px;height:18px;background:#fff;border-bottom:1px solid #d9dce3"></div>
<div class="a t" style="left:18px;top:476.5px;width:58px;height:16px;line-height:16px;text-align:center;color:#111">24450</div>
<div class="a" style="left:81px;top:493px;width:437px;height:1px;background:#ccd3e4"></div>
<div class="a" style="left:523px;top:493px;width:421px;height:1px;background:#ccd3e4"></div>
<div class="a t" style="left:70.5px;top:476.5px;width:60px;height:16px;line-height:16px;text-align:right;letter-spacing:.12px;color:#f20d1c">252.25</div>
<div class="a t" style="left:124.5px;top:476.5px;width:60px;height:16px;line-height:16px;text-align:right;letter-spacing:.12px;color:#111">-35.75</div>
<div class="a t" style="left:178.5px;top:476.5px;width:60px;height:16px;line-height:16px;text-align:right;letter-spacing:.12px;color:#111">0.04</div>
<div class="a t" style="left:232.5px;top:476.5px;width:60px;height:16px;line-height:16px;text-align:right;letter-spacing:.12px;color:#111">-22.78</div>
<div class="a t" style="left:510.5px;top:476.5px;width:60px;height:16px;line-height:16px;text-align:right;letter-spacing:.12px;color:#f20d1c">278.25</div>
<div class="a t" style="left:562.5px;top:476.5px;width:60px;height:16px;line-height:16px;text-align:right;letter-spacing:.12px;color:#111">-36.34</div>
<div class="a t" style="left:614.5px;top:476.5px;width:60px;height:16px;line-height:16px;text-align:right;letter-spacing:.12px;color:#111">0.03</div>
<div class="a t" style="left:666.5px;top:476.5px;width:60px;height:16px;line-height:16px;text-align:right;letter-spacing:.12px;color:#111">-17.70</div>
<div class="a" style="left:134px;top:0;width:1px;height:490px;background:#ccd3e4"></div>
<div class="a" style="left:188px;top:0;width:1px;height:490px;background:#ccd3e4"></div>
<div class="a" style="left:242px;top:0;width:1px;height:490px;background:#ccd3e4"></div>
<div class="a" style="left:296px;top:0;width:1px;height:490px;background:#ccd3e4"></div>
<div class="a" style="left:350px;top:0;width:1px;height:490px;background:#ccd3e4"></div>
<div class="a" style="left:404px;top:0;width:1px;height:490px;background:#ccd3e4"></div>
<div class="a" style="left:458px;top:0;width:1px;height:490px;background:#ccd3e4"></div>
<div class="a" style="left:574px;top:0;width:1px;height:490px;background:#ccd3e4"></div>
<div class="a" style="left:626px;top:0;width:1px;height:490px;background:#ccd3e4"></div>
<div class="a" style="left:678px;top:0;width:1px;height:490px;background:#ccd3e4"></div>
<div class="a" style="left:730px;top:0;width:1px;height:490px;background:#ccd3e4"></div>
<div class="a" style="left:782px;top:0;width:1px;height:490px;background:#ccd3e4"></div>
<div class="a" style="left:834px;top:0;width:1px;height:490px;background:#ccd3e4"></div>
<div class="a" style="left:886px;top:0;width:1px;height:490px;background:#ccd3e4"></div>
<div class="a" style="left:943px;top:0;width:1px;height:490px;background:#ccd3e4"></div>
</div>
<svg class="a" style="left:946px;top:418px" width="10" height="6"><path d="M0.5 5.5 L5 0.8 L9.5 5.5 Z" fill="#6f7a92"/></svg>
<div class="a" style="left:947px;top:622px;width:9px;height:43px;background:#9ca7b8;"></div>
<svg class="a" style="left:946px;top:893px" width="10" height="6"><path d="M0.5 0.5 H9.5 L5 5.2 Z" fill="#6f7a92"/></svg>
<div class="a" style="left:12px;top:918px;width:950px;height:24px;background:#d0d6e6;"></div>
<div class="a t " style="top:922px;line-height:16px;height:16px;left:19px;color:#15203a;">Trade Analysis</div>
<div class="a" style="left:105px;top:919px;width:150px;height:20px;background:#fff;border:1px solid #a9b3c9;box-sizing:border-box;"></div>
<div class="a t " style="top:921.8px;line-height:16px;height:16px;left:110px;color:#111;">Combined</div>
<svg class="a" style="left:243px;top:927px" width="8" height="5"><path d="M0.3 0.3 H7.7 L4 4.4 Z" fill="#64738f"/></svg>
<div class="a" style="left:263px;top:919px;width:80px;height:20px;background:#fff;border:1px solid #a9b3c9;box-sizing:border-box;"></div>
<div class="a t " style="top:921.8px;line-height:16px;height:16px;left:268px;color:#111;">Auto</div>
<svg class="a" style="left:331px;top:927px" width="8" height="5"><path d="M0.3 0.3 H7.7 L4 4.4 Z" fill="#64738f"/></svg>
<div class="a" style="left:818px;top:922px;width:13px;height:13px;background:#fff;border:1px solid #8e98b0;box-sizing:border-box;"></div>
<div class="a t " style="top:922px;line-height:16px;height:16px;left:835px;color:#15203a;word-spacing:3px;letter-spacing:.1px;">Ignore Today's Trades</div>
<div class="a" style="left:13px;top:942px;width:949px;height:60px;background:#fff;border:1px solid #9da8c0;box-sizing:border-box;"></div>
<div class="a" style="left:14px;top:943px;width:947px;height:20px;background:#f8f9fc;"></div>
<div class="a t " style="top:945px;line-height:16px;height:16px;left:14.5px;width:71px;text-align:center;color:#222;">Analysis</div>
<div class="a" style="left:85px;top:943px;width:1px;height:20px;background:#c5cbdb;"></div>
<div class="a t " style="top:945px;line-height:16px;height:16px;left:85.5px;width:72px;text-align:center;color:#222;">Margin</div>
<div class="a" style="left:157px;top:943px;width:1px;height:20px;background:#c5cbdb;"></div>
<div class="a t " style="top:945px;line-height:16px;height:16px;left:157.5px;width:72px;text-align:center;color:#222;">Cost</div>
<div class="a" style="left:229px;top:943px;width:1px;height:20px;background:#c5cbdb;"></div>
<div class="a t " style="top:945px;line-height:16px;height:16px;left:229.5px;width:72px;text-align:center;color:#222;">Curr Cost</div>
<div class="a" style="left:301px;top:943px;width:1px;height:20px;background:#c5cbdb;"></div>
<div class="a t " style="top:945px;line-height:16px;height:16px;left:301.5px;width:72px;text-align:center;color:#222;">Commission</div>
<div class="a" style="left:373px;top:943px;width:1px;height:20px;background:#c5cbdb;"></div>
<div class="a t " style="top:945px;line-height:16px;height:16px;left:373.5px;width:72px;text-align:center;color:#222;">PnL</div>
<div class="a" style="left:445px;top:943px;width:1px;height:20px;background:#c5cbdb;"></div>
<div class="a t " style="top:945px;line-height:16px;height:16px;left:445.5px;width:72px;text-align:center;color:#222;">PnL%</div>
<div class="a" style="left:517px;top:943px;width:1px;height:20px;background:#c5cbdb;"></div>
<div class="a t " style="top:945px;line-height:16px;height:16px;left:517.5px;width:72px;text-align:center;color:#222;">Delta</div>
<div class="a" style="left:589px;top:943px;width:1px;height:20px;background:#c5cbdb;"></div>
<div class="a t " style="top:945px;line-height:16px;height:16px;left:589.5px;width:72px;text-align:center;color:#222;">Gamma</div>
<div class="a" style="left:661px;top:943px;width:1px;height:20px;background:#c5cbdb;"></div>
<div class="a t " style="top:945px;line-height:16px;height:16px;left:661.5px;width:72px;text-align:center;color:#222;">Theta</div>
<div class="a" style="left:733px;top:943px;width:1px;height:20px;background:#c5cbdb;"></div>
<div class="a t " style="top:945px;line-height:16px;height:16px;left:733.5px;width:72px;text-align:center;color:#222;">Vega</div>
<div class="a" style="left:805px;top:943px;width:1px;height:20px;background:#c5cbdb;"></div>
<div class="a t " style="top:945px;line-height:16px;height:16px;left:805.5px;width:72px;text-align:center;color:#222;">T/D</div>
<div class="a" style="left:877px;top:943px;width:1px;height:20px;background:#c5cbdb;"></div>
<div class="a t " style="top:945px;line-height:16px;height:16px;left:877.5px;width:84px;text-align:center;color:#222;">Plot</div>
<div class="a" style="left:14px;top:963px;width:947px;height:1px;background:#c5cbdb;"></div>
<div class="a" style="left:14px;top:982px;width:947px;height:1px;background:#d5dae5;"></div>
<div class="a" style="left:85px;top:964px;width:1px;height:37px;background:#d5dae5;"></div>
<div class="a" style="left:157px;top:964px;width:1px;height:37px;background:#d5dae5;"></div>
<div class="a" style="left:229px;top:964px;width:1px;height:37px;background:#d5dae5;"></div>
<div class="a" style="left:301px;top:964px;width:1px;height:37px;background:#d5dae5;"></div>
<div class="a" style="left:373px;top:964px;width:1px;height:37px;background:#d5dae5;"></div>
<div class="a" style="left:445px;top:964px;width:1px;height:37px;background:#d5dae5;"></div>
<div class="a" style="left:517px;top:964px;width:1px;height:37px;background:#d5dae5;"></div>
<div class="a" style="left:589px;top:964px;width:1px;height:37px;background:#d5dae5;"></div>
<div class="a" style="left:661px;top:964px;width:1px;height:37px;background:#d5dae5;"></div>
<div class="a" style="left:733px;top:964px;width:1px;height:37px;background:#d5dae5;"></div>
<div class="a" style="left:805px;top:964px;width:1px;height:37px;background:#d5dae5;"></div>
<div class="a" style="left:877px;top:964px;width:1px;height:37px;background:#d5dae5;"></div>
<svg class="a" style="left:16px;top:968.5px" width="10" height="10"><rect x=".5" y=".5" width="8" height="8" fill="#fff" stroke="#707070"/><path d="M2 4.5 H7 M4.5 2 V7" stroke="#333" stroke-width="1"/></svg>
<div class="a t " style="top:965.5px;line-height:16px;height:16px;left:32px;color:#1f6fd0;">Position</div>
<div class="a t " style="top:965.5px;line-height:16px;height:16px;left:84px;width:70px;text-align:right;color:#111;">5,703.40</div>
<div class="a t " style="top:965.5px;line-height:16px;height:16px;left:156px;width:70px;text-align:right;color:#111;">-1,216.80</div>
<div class="a t " style="top:965.5px;line-height:16px;height:16px;left:228px;width:70px;text-align:right;color:#111;">1,770.00</div>
<div class="a t " style="top:965.5px;line-height:16px;height:16px;left:300px;width:70px;text-align:right;color:#111;">6.80</div>
<div class="a t " style="top:965.5px;line-height:16px;height:16px;left:372px;width:70px;text-align:right;color:#1f8a1f;">553.20</div>
<div class="a t " style="top:965.5px;line-height:16px;height:16px;left:444px;width:70px;text-align:right;color:#1f8a1f;">9.70%</div>
<div class="a t " style="top:965.5px;line-height:16px;height:16px;left:516px;width:70px;text-align:right;color:#111;">-1.51</div>
<div class="a t " style="top:965.5px;line-height:16px;height:16px;left:588px;width:70px;text-align:right;color:#111;">0.00</div>
<div class="a t " style="top:965.5px;line-height:16px;height:16px;left:660px;width:70px;text-align:right;color:#111;">164.16</div>
<div class="a t " style="top:965.5px;line-height:16px;height:16px;left:732px;width:70px;text-align:right;color:#111;">-75.98</div>
<div class="a t " style="top:965.5px;line-height:16px;height:16px;left:804px;width:70px;text-align:right;color:#111;">108.7</div>
<svg class="a" style="left:913px;top:966px" width="13" height="13"><rect x=".5" y=".5" width="12" height="12" fill="#fff" stroke="#8e98b0"/><path d="M3 6.5 L5.5 9.5 L10 3.2" stroke="#56617c" stroke-width="1.7" fill="none"/></svg>
<svg class="a" style="left:16px;top:987.5px" width="10" height="10"><rect x=".5" y=".5" width="8" height="8" fill="#fff" stroke="#707070"/><path d="M2 4.5 H7 M4.5 2 V7" stroke="#333" stroke-width="1"/></svg>
<div class="a t " style="top:984.5px;line-height:16px;height:16px;left:32px;color:#1f8a1f;">Model</div>
<div class="a t " style="top:984.5px;line-height:16px;height:16px;left:84px;width:70px;text-align:right;color:#111;">26,719.84</div>
<div class="a t " style="top:984.5px;line-height:16px;height:16px;left:156px;width:70px;text-align:right;color:#111;">-918.50</div>
<div class="a t " style="top:984.5px;line-height:16px;height:16px;left:228px;width:70px;text-align:right;color:#111;">1,470.00</div>
<div class="a t " style="top:984.5px;line-height:16px;height:16px;left:300px;width:70px;text-align:right;color:#111;">8.50</div>
<div class="a t " style="top:984.5px;line-height:16px;height:16px;left:372px;width:70px;text-align:right;color:#1f8a1f;">551.50</div>
<div class="a t " style="top:984.5px;line-height:16px;height:16px;left:444px;width:70px;text-align:right;color:#1f8a1f;">2.06%</div>
<div class="a t " style="top:984.5px;line-height:16px;height:16px;left:516px;width:70px;text-align:right;color:#111;">-1.14</div>
<div class="a t " style="top:984.5px;line-height:16px;height:16px;left:588px;width:70px;text-align:right;color:#111;">0.00</div>
<div class="a t " style="top:984.5px;line-height:16px;height:16px;left:660px;width:70px;text-align:right;color:#111;">163.66</div>
<div class="a t " style="top:984.5px;line-height:16px;height:16px;left:732px;width:70px;text-align:right;color:#111;">-79.89</div>
<div class="a t " style="top:984.5px;line-height:16px;height:16px;left:804px;width:70px;text-align:right;color:#111;">143.6</div>
<svg class="a" style="left:913px;top:985px" width="13" height="13"><rect x=".5" y=".5" width="12" height="12" fill="#fff" stroke="#8e98b0"/><path d="M3 6.5 L5.5 9.5 L10 3.2" stroke="#56617c" stroke-width="1.7" fill="none"/></svg>
<div class="a" style="left:974px;top:164px;width:935px;height:813px;border:1px solid #a9b3c9;box-sizing:border-box;border-bottom:none;"></div>
<div class="a" style="left:975px;top:191px;width:932px;height:1px;background:#a9b3c9;"></div>
<div class="a" style="left:1906px;top:192px;width:1px;height:785px;background:#a9b3c9;"></div>
<div class="a" style="left:974px;top:166px;width:77px;height:26px;background:#d6dbe9;border:1px solid #a9b3c9;border-bottom:none;box-sizing:border-box;"></div>
<div class="a t " style="top:170px;line-height:16px;height:16px;left:974.5px;width:76px;text-align:center;color:#15203a;">Risk Chart</div>
<div class="a" style="left:1050px;top:166px;width:81px;height:26px;background:#d0d6e6;border:1px solid #a9b3c9;box-sizing:border-box;"></div>
<div class="a t " style="top:170px;line-height:16px;height:16px;left:1050.5px;width:80px;text-align:center;color:#15203a;">Price Chart</div>
<div class="a" style="left:1132px;top:166px;width:124px;height:26px;background:#d0d6e6;border:1px solid #a9b3c9;box-sizing:border-box;"></div>
<div class="a t " style="top:170px;line-height:16px;height:16px;left:1132.5px;width:123px;text-align:center;color:#15203a;">Movement Analysis</div>
<div class="a" style="left:1257px;top:166px;width:66px;height:26px;background:#d0d6e6;border:1px solid #a9b3c9;box-sizing:border-box;"></div>
<div class="a t " style="top:170px;line-height:16px;height:16px;left:1257.5px;width:65px;text-align:center;color:#15203a;">Volatility</div>
<div class="a" style="left:1324px;top:166px;width:160px;height:26px;background:#d0d6e6;border:1px solid #a9b3c9;box-sizing:border-box;"></div>
<div class="a t " style="top:170px;line-height:16px;height:16px;left:1324.5px;width:159px;text-align:center;color:#15203a;">Statistics &amp; Fundamentals</div>
<div class="a t " style="top:197px;line-height:16px;height:16px;left:981px;color:#15203a;letter-spacing:.25px;">Vol Adjust</div>
<div class="a" style="left:1042px;top:194px;width:53px;height:20px;background:#fff;border:1px solid #a9b3c9;box-sizing:border-box;"></div>
<div class="a t " style="top:196.5px;line-height:16px;height:16px;left:1044px;width:30px;text-align:right;color:#111;">0</div>
<svg class="a" style="left:1082px;top:197px" width="9" height="14"><path d="M0.8 4.2 L4.5 0.3 L8.2 4.2 Z M0.8 10 L4.5 13.9 L8.2 10 Z" fill="#64738f"/></svg>
<div class="a t " style="top:196.5px;line-height:16px;height:16px;left:1615px;width:100px;text-align:right;color:#15203a;">Projection</div>
<div class="a" style="left:1720px;top:194px;width:180px;height:21px;background:#fff;border:1px solid #a9b3c9;box-sizing:border-box;"></div>
<div class="a t " style="top:196.5px;line-height:16px;height:16px;left:1723.5px;color:#111;letter-spacing:.45px;">19/02/2026</div>
<div class="a t " style="top:196.5px;line-height:16px;height:16px;left:1816px;color:#111;">T+0</div>
<div class="a t " style="top:196.5px;line-height:16px;height:16px;left:1845px;color:#111;">1Ln</div>
<svg class="a" style="left:1798px;top:203px" width="9" height="5"><path d="M0.5 0.5 H8.5 L4.5 4.8 Z" fill="#7a859c"/></svg>
<svg class="a" style="left:1873px;top:199px" width="6" height="11"><path d="M5.5 0.8 V10.2 L0.5 5.5 Z" fill="#1e2b44"/></svg>
<svg class="a" style="left:1889px;top:199px" width="6" height="11"><path d="M0.5 0.8 V10.2 L5.5 5.5 Z" fill="#1e2b44"/></svg>
<svg class="a" style="left:976px;top:217px" width="930" height="760" viewBox="976 217 930 760" font-family="'Liberation Sans','DejaVu Sans',sans-serif" font-size="11">
<rect x="976" y="217" width="930" height="760" fill="#fff"/>
<rect x="1148" y="236" width="704" height="530.5" fill="#92cddc"/>
<rect x="1329" y="236" width="362" height="530.5" fill="#4f81bd"/>
<path d="M1079.5 231.5 V770.5 M1134.5 231.5 V770.5 M1190.5 231.5 V770.5 M1245.5 231.5 V770.5 M1300.5 231.5 V770.5 M1356.5 231.5 V770.5 M1411.5 231.5 V770.5 M1467.5 231.5 V770.5 M1522.5 231.5 V770.5 M1577.5 231.5 V770.5 M1633.5 231.5 V770.5 M1688.5 231.5 V770.5 M1743.5 231.5 V770.5 M1799.5 231.5 V770.5 M1027 235.5 H1856 M1027 273.5 H1856 M1027 311.5 H1856 M1027 349.5 H1856 M1027 387.5 H1856 M1027 425.5 H1856 M1027 463.5 H1856 M1027 500.5 H1856 M1027 538.5 H1856 M1027 576.5 H1856 M1027 614.5 H1856 M1027 652.5 H1856 M1027 690.5 H1856 M1027 728.5 H1856 M1027 766.5 H1856" stroke="#dcdcdc" stroke-width="1.3" fill="none"/>
<path d="M1030.5 236 V766.5" stroke="#dcdcdc" stroke-width="1.3"/>
<text transform="translate(1160 284) rotate(-90)" fill="#b8dde8" opacity="0.9">24124.83</text>
<text transform="translate(1340.5 284) rotate(-90)" fill="#9fd0e6" opacity="1">24451.17</text>
<text transform="translate(1689.5 284) rotate(-90)" fill="#9fd0e6" opacity="1">25103.83</text>
<path d="M1104.5 236 V766.5 M1662.5 236 V766.5" stroke="#8b008b" stroke-width="1.2" stroke-dasharray="5 4" fill="none"/>
<text transform="translate(1103.3 764.5) rotate(-90)" fill="#96209f" opacity="1">24045.26</text>
<text transform="translate(1661.3 764.5) rotate(-90)" fill="#8b1a9a" opacity="1">25052.33</text>
<path d="M1329.5 611 L1381 615 L1509 626.6 L1572 632.6 V642.6 L1509 636.6 L1381 625 L1329.5 621 Z" fill="#e8a39a" opacity=".78"/>
<path d="M1031 615.4 C1080 613 1130 611.2 1185 611.2 C1250 611.4 1300 613.8 1340 616.8 L1381 620" stroke="#12ea12" stroke-width="1.4" fill="none"/>
<path d="M1031 629 C1100 623.5 1170 620.6 1250 619.9 C1320 620.4 1400 623 1509 631.2 L1560 635.8 L1689 647.6 L1743 652.4 L1852 661.7" stroke="#4ccc4c" stroke-width="1.4" fill="none"/>
<path d="M1381 620 L1509 631.6 L1560 636.9 L1698 652.4 L1852 668.6" stroke="#6f96f2" stroke-width="1.4" fill="none"/>
<path d="M1031 652.5 H1856" stroke="#000" stroke-width="1.1"/>
<path d="M1029.5 727.3 L1355.3 282 Q1356 281 1357.5 281 H1380.8 Q1382.2 281 1383 282 L1686.8 696.5 Q1688 698 1690 698 H1852" stroke="#3d3dc6" stroke-width="1.8" fill="none"/>
<path d="M1029.5 754.5 L1382.8 272.4 Q1383.9 270.8 1385 272.4 L1687 685.8 Q1688.2 687.5 1690.5 687.5 H1852" stroke="#008000" stroke-width="2" fill="none"/>
<circle cx="1509.4" cy="631.6" r="4.6" fill="#00ffff" stroke="#000" stroke-width="1.1"/>
<text x="1079.3" y="228.6" text-anchor="middle" fill="#111">-3.1%</text>
<text x="1134.7" y="228.6" text-anchor="middle" fill="#111">-2.7%</text>
<text x="1190.1" y="228.6" text-anchor="middle" fill="#111">-2.3%</text>
<text x="1245.5" y="228.6" text-anchor="middle" fill="#111">-1.9%</text>
<text x="1300.9" y="228.6" text-anchor="middle" fill="#111">-1.5%</text>
<text x="1356.2" y="228.6" text-anchor="middle" fill="#111">-1.1%</text>
<text x="1411.6" y="228.6" text-anchor="middle" fill="#111">-0.7%</text>
<text x="1467.0" y="228.6" text-anchor="middle" fill="#111">-0.3%</text>
<text x="1522.4" y="228.6" text-anchor="middle" fill="#111">0.1%</text>
<text x="1577.8" y="228.6" text-anchor="middle" fill="#111">0.5%</text>
<text x="1633.2" y="228.6" text-anchor="middle" fill="#111">0.9%</text>
<text x="1688.5" y="228.6" text-anchor="middle" fill="#111">1.3%</text>
<text x="1743.9" y="228.6" text-anchor="middle" fill="#111">1.7%</text>
<text x="1799.3" y="228.6" text-anchor="middle" fill="#111">2.1%</text>
<rect x="1494.5" y="218" width="29" height="12.5" fill="#eef3fb" stroke="#34425e" stroke-width="1"/>
<text x="1509" y="228.6" text-anchor="middle" fill="#111">0.0%</text>
<text x="1023" y="239.9" text-anchor="end" fill="#111">193%</text>
<text x="1860" y="239.9" fill="#111">11,000</text>
<text x="1023" y="277.8" text-anchor="end" fill="#111">175%</text>
<text x="1860" y="277.8" fill="#111">10,000</text>
<text x="1023" y="315.7" text-anchor="end" fill="#111">158%</text>
<text x="1860" y="315.7" fill="#111">9,000</text>
<text x="1023" y="353.6" text-anchor="end" fill="#111">140%</text>
<text x="1860" y="353.6" fill="#111">8,000</text>
<text x="1023" y="391.5" text-anchor="end" fill="#111">123%</text>
<text x="1860" y="391.5" fill="#111">7,000</text>
<text x="1023" y="429.4" text-anchor="end" fill="#111">105%</text>
<text x="1860" y="429.4" fill="#111">6,000</text>
<text x="1023" y="467.3" text-anchor="end" fill="#111">88%</text>
<text x="1860" y="467.3" fill="#111">5,000</text>
<text x="1023" y="505.2" text-anchor="end" fill="#111">70%</text>
<text x="1860" y="505.2" fill="#111">4,000</text>
<text x="1023" y="543.1" text-anchor="end" fill="#111">53%</text>
<text x="1860" y="543.1" fill="#111">3,000</text>
<text x="1023" y="581.0" text-anchor="end" fill="#111">35%</text>
<text x="1860" y="581.0" fill="#111">2,000</text>
<text x="1023" y="618.9" text-anchor="end" fill="#111">18%</text>
<text x="1860" y="618.9" fill="#111">1,000</text>
<text x="1023" y="656.8" text-anchor="end" fill="#111">0%</text>
<text x="1860" y="656.8" fill="#111">0</text>
<text x="1023" y="694.7" text-anchor="end" fill="#111">-18%</text>
<text x="1860" y="694.7" fill="#111">-1,000</text>
<text x="1023" y="732.6" text-anchor="end" fill="#111">-35%</text>
<text x="1860" y="732.6" fill="#111">-2,000</text>
<text x="1023" y="770.5" text-anchor="end" fill="#111">-53%</text>
<text x="1860" y="770.5" fill="#111">-3,000</text>
<text x="1079.9" y="782.7" text-anchor="middle" fill="#111">24000</text>
<text x="1135.3" y="782.7" text-anchor="middle" fill="#111">24100</text>
<text x="1190.7" y="782.7" text-anchor="middle" fill="#111">24200</text>
<text x="1246.1" y="782.7" text-anchor="middle" fill="#111">24300</text>
<text x="1301.5" y="782.7" text-anchor="middle" fill="#111">24400</text>
<text x="1356.8" y="782.7" text-anchor="middle" fill="#111">24500</text>
<text x="1412.2" y="782.7" text-anchor="middle" fill="#111">24600</text>
<text x="1467.6" y="782.7" text-anchor="middle" fill="#111">24700</text>
<text x="1523.0" y="782.7" text-anchor="middle" fill="#111">24800</text>
<text x="1578.4" y="782.7" text-anchor="middle" fill="#111">24900</text>
<text x="1633.8" y="782.7" text-anchor="middle" fill="#111">25000</text>
<text x="1689.1" y="782.7" text-anchor="middle" fill="#111">25100</text>
<text x="1744.5" y="782.7" text-anchor="middle" fill="#111">25200</text>
<text x="1799.9" y="782.7" text-anchor="middle" fill="#111">25300</text>
<rect x="981" y="624" width="45" height="14" fill="#008000"/><text x="1023" y="636" text-anchor="end" fill="#fff">10%</text>
<rect x="1856" y="624" width="47" height="14" fill="#008000"/><text x="1860" y="636" fill="#fff">551</text>
<rect x="1035.5" y="241" width="170" height="111" rx="6" fill="#e9f0f8" fill-opacity=".86" stroke="#63728a" stroke-width="1.2"/>
<rect x="1043.5" y="248.2" width="3.5" height="13" fill="#f03c3c"/>
<text x="1047" y="259.2" fill="#555">-851.47 Realized PnL</text>
<rect x="1043.5" y="262.2" width="3.5" height="13" fill="#4fc84f"/>
<text x="1047" y="273.2" fill="#555">-1</text>
<text x="1060.7" y="273.2" fill="#f04848">27feb. 24550 Put Δ</text><text x="1196.3" y="273.2" fill="#f04848" text-anchor="end">-39.30</text>
<rect x="1043.5" y="276.2" width="3.5" height="13" fill="#4fc84f"/>
<text x="1047" y="287.2" fill="#555">+1</text>
<text x="1062.8" y="287.2" fill="#4545e8">27feb. 24500 Put Δ</text><text x="1198.1" y="287.2" fill="#4545e8" text-anchor="end">-37.50</text>
<rect x="1043.5" y="290.2" width="3.5" height="13" fill="#8ea8ea"/>
<text x="1047" y="301.2" fill="#555">+1</text>
<text x="1062.8" y="301.2" fill="#4545e8">27feb. 23900 Put Δ</text><text x="1198.1" y="301.2" fill="#4545e8" text-anchor="end">-20.62</text>
<rect x="1043.5" y="304.2" width="3.5" height="13" fill="#8ea8ea"/>
<text x="1047" y="315.2" fill="#555">+1</text>
<text x="1062.8" y="315.2" fill="#4545e8">27feb. 25100 Put Δ</text><text x="1198.1" y="315.2" fill="#4545e8" text-anchor="end">-63.77</text>
<rect x="1043.5" y="318.2" width="3.5" height="13" fill="#8ea8ea"/>
<text x="1047" y="329.2" fill="#555">-1</text>
<text x="1060.7" y="329.2" fill="#f04848">27feb. 24500 Put Δ</text><text x="1196.3" y="329.2" fill="#f04848" text-anchor="end">-37.50</text>
<rect x="1043.5" y="332.2" width="3.5" height="13" fill="#8ea8ea"/>
<text x="1047" y="343.2" fill="#555">-1</text>
<text x="1060.7" y="343.2" fill="#f04848">27feb. 24550 Put Δ</text><text x="1196.3" y="343.2" fill="#f04848" text-anchor="end">-39.30</text>
<rect x="1035.5" y="719.5" width="87" height="42" rx="6" fill="#e9f0f8" fill-opacity=".72" stroke="#63728a" stroke-width="1.2"/>
<text x="1043" y="737.8" fill="#48984a">27/02/2026 (0)</text><text x="1043" y="751.9" fill="#84e184">19/02/2026 (8)</text>
<text x="1067" y="757.9" text-anchor="middle" fill="#8b128f">21.4%</text>
<text x="1383" y="757.9" text-anchor="middle" fill="#8b128f">39.9%</text>
<text x="1756" y="757.9" text-anchor="middle" fill="#8b128f">38.7%</text>
<rect x="980.5" y="787.5" width="921" height="184" rx="6" fill="#e9f0f9" stroke="#44546e" stroke-width="1.2"/>
<text x="1006" y="820" text-anchor="middle" fill="#666">PnL</text><text x="1880" y="820" text-anchor="middle" fill="#666">PnL</text>
<text x="1006" y="862" text-anchor="middle" fill="#666">Delta</text><text x="1880" y="862" text-anchor="middle" fill="#666">Delta</text>
<text x="1006" y="894" text-anchor="middle" fill="#666">Gamma</text><text x="1880" y="894" text-anchor="middle" fill="#666">Gamma</text>
<text x="1006" y="926" text-anchor="middle" fill="#666">Theta</text><text x="1880" y="926" text-anchor="middle" fill="#666">Theta</text>
<text x="1006" y="957.7" text-anchor="middle" fill="#666">Vega</text><text x="1880" y="957.7" text-anchor="middle" fill="#666">Vega</text>
<rect x="1031.0" y="807.2" width="77.5" height="8.3" fill="#5b7df7" stroke="#555" stroke-width=".8"/>
<rect x="1108.5" y="806.3" width="55.4" height="9.2" fill="#5b7df7" stroke="#555" stroke-width=".8"/>
<rect x="1163.9" y="805.7" width="55.4" height="9.8" fill="#5b7df7" stroke="#555" stroke-width=".8"/>
<rect x="1219.3" y="805.6" width="55.4" height="9.9" fill="#5b7df7" stroke="#555" stroke-width=".8"/>
<rect x="1274.7" y="805.8" width="55.4" height="9.7" fill="#5b7df7" stroke="#555" stroke-width=".8"/>
<rect x="1330.1" y="806.3" width="55.4" height="9.2" fill="#5b7df7" stroke="#555" stroke-width=".8"/>
<rect x="1385.4" y="807.1" width="55.4" height="8.4" fill="#5b7df7" stroke="#555" stroke-width=".8"/>
<rect x="1440.8" y="808.2" width="55.4" height="7.3" fill="#5b7df7" stroke="#555" stroke-width=".8"/>
<rect x="1496.2" y="809.5" width="55.4" height="6.0" fill="#5b7df7" stroke="#555" stroke-width=".8"/>
<rect x="1551.6" y="810.9" width="55.4" height="4.6" fill="#5b7df7" stroke="#555" stroke-width=".8"/>
<rect x="1607.0" y="812.4" width="55.4" height="3.1" fill="#5b7df7" stroke="#555" stroke-width=".8"/>
<path d="M1662.3 815.5 H1717.7" stroke="#4d4d4d" stroke-width="1.8"/>
<path d="M1717.7 815.5 H1773.1" stroke="#4d4d4d" stroke-width="1.8"/>
<path d="M1773.1 815.5 H1852.0" stroke="#4d4d4d" stroke-width="1.8"/>
<rect x="1031.0" y="850.9" width="77.5" height="6.6" fill="#5b7df7" stroke="#555" stroke-width=".8"/>
<rect x="1108.5" y="853.1" width="55.4" height="4.4" fill="#5b7df7" stroke="#555" stroke-width=".8"/>
<rect x="1163.9" y="855.4" width="55.4" height="2.1" fill="#5b7df7" stroke="#555" stroke-width=".8"/>
<path d="M1219.3 857.5 H1274.7" stroke="#4d4d4d" stroke-width="1.8"/>
<rect x="1274.7" y="857.5" width="55.4" height="2.2" fill="#f4777b" stroke="#555" stroke-width=".8"/>
<rect x="1330.1" y="857.5" width="55.4" height="4.1" fill="#f4777b" stroke="#555" stroke-width=".8"/>
<rect x="1385.4" y="857.5" width="55.4" height="5.8" fill="#f4777b" stroke="#555" stroke-width=".8"/>
<rect x="1440.8" y="857.5" width="55.4" height="7.1" fill="#f4777b" stroke="#555" stroke-width=".8"/>
<rect x="1496.2" y="857.5" width="55.4" height="8.2" fill="#f4777b" stroke="#555" stroke-width=".8"/>
<rect x="1551.6" y="857.5" width="55.4" height="9.0" fill="#f4777b" stroke="#555" stroke-width=".8"/>
<rect x="1607.0" y="857.5" width="55.4" height="9.3" fill="#f4777b" stroke="#555" stroke-width=".8"/>
<rect x="1662.3" y="857.5" width="55.4" height="9.5" fill="#f4777b" stroke="#555" stroke-width=".8"/>
<rect x="1717.7" y="857.5" width="55.4" height="9.2" fill="#f4777b" stroke="#555" stroke-width=".8"/>
<rect x="1773.1" y="857.5" width="78.9" height="8.9" fill="#f4777b" stroke="#555" stroke-width=".8"/>
<rect x="1031.0" y="915.1" width="77.5" height="5.9" fill="#5b7df7" stroke="#555" stroke-width=".8"/>
<rect x="1108.5" y="913.9" width="55.4" height="7.1" fill="#5b7df7" stroke="#555" stroke-width=".8"/>
<rect x="1163.9" y="912.9" width="55.4" height="8.1" fill="#5b7df7" stroke="#555" stroke-width=".8"/>
<rect x="1219.3" y="912.2" width="55.4" height="8.8" fill="#5b7df7" stroke="#555" stroke-width=".8"/>
<rect x="1274.7" y="911.8" width="55.4" height="9.2" fill="#5b7df7" stroke="#555" stroke-width=".8"/>
<rect x="1330.1" y="911.7" width="55.4" height="9.3" fill="#5b7df7" stroke="#555" stroke-width=".8"/>
<rect x="1385.4" y="911.8" width="55.4" height="9.2" fill="#5b7df7" stroke="#555" stroke-width=".8"/>
<rect x="1440.8" y="912.2" width="55.4" height="8.8" fill="#5b7df7" stroke="#555" stroke-width=".8"/>
<rect x="1496.2" y="912.8" width="55.4" height="8.2" fill="#5b7df7" stroke="#555" stroke-width=".8"/>
<rect x="1551.6" y="913.5" width="55.4" height="7.5" fill="#5b7df7" stroke="#555" stroke-width=".8"/>
<rect x="1607.0" y="914.4" width="55.4" height="6.6" fill="#5b7df7" stroke="#555" stroke-width=".8"/>
<rect x="1662.3" y="915.2" width="55.4" height="5.8" fill="#5b7df7" stroke="#555" stroke-width=".8"/>
<rect x="1717.7" y="916.1" width="55.4" height="4.9" fill="#5b7df7" stroke="#555" stroke-width=".8"/>
<rect x="1773.1" y="916.9" width="78.9" height="4.1" fill="#5b7df7" stroke="#555" stroke-width=".8"/>
<rect x="1031.0" y="954" width="77.5" height="8.0" fill="#f4777b" stroke="#555" stroke-width=".8"/>
<rect x="1108.5" y="954" width="55.4" height="8.8" fill="#f4777b" stroke="#555" stroke-width=".8"/>
<rect x="1163.9" y="954" width="55.4" height="9.3" fill="#f4777b" stroke="#555" stroke-width=".8"/>
<rect x="1219.3" y="954" width="55.4" height="9.5" fill="#f4777b" stroke="#555" stroke-width=".8"/>
<rect x="1274.7" y="954" width="55.4" height="9.4" fill="#f4777b" stroke="#555" stroke-width=".8"/>
<rect x="1330.1" y="954" width="55.4" height="9.0" fill="#f4777b" stroke="#555" stroke-width=".8"/>
<rect x="1385.4" y="954" width="55.4" height="8.4" fill="#f4777b" stroke="#555" stroke-width=".8"/>
<rect x="1440.8" y="954" width="55.4" height="7.5" fill="#f4777b" stroke="#555" stroke-width=".8"/>
<rect x="1496.2" y="954" width="55.4" height="6.6" fill="#f4777b" stroke="#555" stroke-width=".8"/>
<rect x="1551.6" y="954" width="55.4" height="5.5" fill="#f4777b" stroke="#555" stroke-width=".8"/>
<rect x="1607.0" y="954" width="55.4" height="4.4" fill="#f4777b" stroke="#555" stroke-width=".8"/>
<rect x="1662.3" y="954" width="55.4" height="3.3" fill="#f4777b" stroke="#555" stroke-width=".8"/>
<rect x="1717.7" y="954" width="55.4" height="2.3" fill="#f4777b" stroke="#555" stroke-width=".8"/>
<path d="M1773.1 954 H1852.0" stroke="#4d4d4d" stroke-width="1.8"/>
<text x="1080.8" y="825.6" text-anchor="middle" fill="#6c80f0">723</text><text x="1080.8" y="836" text-anchor="middle" fill="#6c80f0">13%</text>
<text x="1080.8" y="868.4" text-anchor="middle" fill="#6c80f0">0.95</text>
<text x="1080.8" y="900" text-anchor="middle" fill="#6c80f0">0.00</text>
<text x="1080.8" y="932.3" text-anchor="middle" fill="#6c80f0">116.21</text>
<text x="1080.8" y="953.2" text-anchor="middle" fill="#f06868">-93.67</text>
<text x="1136.2" y="825.6" text-anchor="middle" fill="#6c80f0">802</text><text x="1136.2" y="836" text-anchor="middle" fill="#6c80f0">14%</text>
<text x="1136.2" y="868.4" text-anchor="middle" fill="#6c80f0">0.63</text>
<text x="1136.2" y="900" text-anchor="middle" fill="#6c80f0">0.00</text>
<text x="1136.2" y="932.3" text-anchor="middle" fill="#6c80f0">139.99</text>
<text x="1136.2" y="953.2" text-anchor="middle" fill="#f06868">-103.09</text>
<text x="1191.6" y="825.6" text-anchor="middle" fill="#6c80f0">848</text><text x="1191.6" y="836" text-anchor="middle" fill="#6c80f0">15%</text>
<text x="1191.6" y="868.4" text-anchor="middle" fill="#6c80f0">0.30</text>
<text x="1191.6" y="900" text-anchor="middle" fill="#6c80f0">0.00</text>
<text x="1191.6" y="932.3" text-anchor="middle" fill="#6c80f0">158.94</text>
<text x="1191.6" y="953.2" text-anchor="middle" fill="#f06868">-109.13</text>
<text x="1247.0" y="825.6" text-anchor="middle" fill="#6c80f0">862</text><text x="1247.0" y="836" text-anchor="middle" fill="#6c80f0">15%</text>
<text x="1247.0" y="857.3" text-anchor="middle" fill="#f06868">-0.02</text>
<text x="1247.0" y="900" text-anchor="middle" fill="#6c80f0">0.00</text>
<text x="1247.0" y="932.3" text-anchor="middle" fill="#6c80f0">172.51</text>
<text x="1247.0" y="953.2" text-anchor="middle" fill="#f06868">-111.59</text>
<text x="1302.4" y="825.6" text-anchor="middle" fill="#6c80f0">845</text><text x="1302.4" y="836" text-anchor="middle" fill="#6c80f0">15%</text>
<text x="1302.4" y="857.3" text-anchor="middle" fill="#f06868">-0.32</text>
<text x="1302.4" y="900" text-anchor="middle" fill="#6c80f0">0.00</text>
<text x="1302.4" y="932.3" text-anchor="middle" fill="#6c80f0">180.43</text>
<text x="1302.4" y="953.2" text-anchor="middle" fill="#f06868">-110.49</text>
<text x="1357.8" y="825.6" text-anchor="middle" fill="#6c80f0">800</text><text x="1357.8" y="836" text-anchor="middle" fill="#6c80f0">14%</text>
<text x="1357.8" y="857.3" text-anchor="middle" fill="#f06868">-0.59</text>
<text x="1357.8" y="900" text-anchor="middle" fill="#6c80f0">0.00</text>
<text x="1357.8" y="932.3" text-anchor="middle" fill="#6c80f0">182.74</text>
<text x="1357.8" y="953.2" text-anchor="middle" fill="#f06868">-106.03</text>
<text x="1413.1" y="825.6" text-anchor="middle" fill="#6c80f0">729</text><text x="1413.1" y="836" text-anchor="middle" fill="#6c80f0">13%</text>
<text x="1413.1" y="857.3" text-anchor="middle" fill="#f06868">-0.83</text>
<text x="1413.1" y="900" text-anchor="middle" fill="#6c80f0">0.00</text>
<text x="1413.1" y="932.3" text-anchor="middle" fill="#6c80f0">179.80</text>
<text x="1413.1" y="953.2" text-anchor="middle" fill="#f06868">-98.62</text>
<text x="1468.5" y="825.6" text-anchor="middle" fill="#6c80f0">636</text><text x="1468.5" y="836" text-anchor="middle" fill="#6c80f0">11%</text>
<text x="1468.5" y="857.3" text-anchor="middle" fill="#f06868">-1.02</text>
<text x="1468.5" y="900" text-anchor="middle" fill="#6c80f0">0.00</text>
<text x="1468.5" y="932.3" text-anchor="middle" fill="#6c80f0">172.22</text>
<text x="1468.5" y="953.2" text-anchor="middle" fill="#f06868">-88.77</text>
<text x="1523.9" y="825.6" text-anchor="middle" fill="#6c80f0">525</text><text x="1523.9" y="836" text-anchor="middle" fill="#6c80f0">9%</text>
<text x="1523.9" y="857.3" text-anchor="middle" fill="#f06868">-1.17</text>
<text x="1523.9" y="900" text-anchor="middle" fill="#6c80f0">0.00</text>
<text x="1523.9" y="932.3" text-anchor="middle" fill="#6c80f0">160.81</text>
<text x="1523.9" y="953.2" text-anchor="middle" fill="#f06868">-77.16</text>
<text x="1579.3" y="825.6" text-anchor="middle" fill="#6c80f0">402</text><text x="1579.3" y="836" text-anchor="middle" fill="#6c80f0">7%</text>
<text x="1579.3" y="857.3" text-anchor="middle" fill="#f06868">-1.28</text>
<text x="1579.3" y="900" text-anchor="middle" fill="#6c80f0">0.00</text>
<text x="1579.3" y="932.3" text-anchor="middle" fill="#6c80f0">146.51</text>
<text x="1579.3" y="953.2" text-anchor="middle" fill="#f06868">-64.46</text>
<text x="1634.7" y="825.6" text-anchor="middle" fill="#6c80f0">271</text><text x="1634.7" y="836" text-anchor="middle" fill="#6c80f0">5%</text>
<text x="1634.7" y="857.3" text-anchor="middle" fill="#f06868">-1.33</text>
<text x="1634.7" y="900" text-anchor="middle" fill="#6c80f0">0.00</text>
<text x="1634.7" y="932.3" text-anchor="middle" fill="#6c80f0">130.31</text>
<text x="1634.7" y="953.2" text-anchor="middle" fill="#f06868">-51.37</text>
<text x="1690.0" y="825.6" text-anchor="middle" fill="#6c80f0">137</text><text x="1690.0" y="836" text-anchor="middle" fill="#6c80f0">2%</text>
<text x="1690.0" y="857.3" text-anchor="middle" fill="#f06868">-1.35</text>
<text x="1690.0" y="900" text-anchor="middle" fill="#6c80f0">0.00</text>
<text x="1690.0" y="932.3" text-anchor="middle" fill="#6c80f0">113.18</text>
<text x="1690.0" y="953.2" text-anchor="middle" fill="#f06868">-38.55</text>
<text x="1745.4" y="825.6" text-anchor="middle" fill="#6c80f0">3</text><text x="1745.4" y="836" text-anchor="middle" fill="#6c80f0">0%</text>
<text x="1745.4" y="857.3" text-anchor="middle" fill="#f06868">-1.32</text>
<text x="1745.4" y="900" text-anchor="middle" fill="#6c80f0">0.00</text>
<text x="1745.4" y="932.3" text-anchor="middle" fill="#6c80f0">96.01</text>
<text x="1745.4" y="953.2" text-anchor="middle" fill="#f06868">-26.55</text>
<text x="1800.8" y="804" text-anchor="middle" fill="#f06868">-2%</text><text x="1800.8" y="815" text-anchor="middle" fill="#f06868">-127</text>
<text x="1800.8" y="857.3" text-anchor="middle" fill="#f06868">-1.27</text>
<text x="1800.8" y="900" text-anchor="middle" fill="#6c80f0">0.00</text>
<text x="1800.8" y="932.3" text-anchor="middle" fill="#6c80f0">79.56</text>
<text x="1800.8" y="953.2" text-anchor="middle" fill="#f06868">-15.81</text>
<rect x="1484.5" y="771.5" width="49" height="199.5" rx="5" fill="#e9f0f9" fill-opacity=".86" stroke="#44546e" stroke-width="1.2"/>
<text x="1486.7" y="782.6" fill="#111">24777.500</text>
<text x="1509.5" y="816" text-anchor="middle" fill="#1a1af0">551</text>
<text x="1509.5" y="830.7" text-anchor="middle" fill="#1a1af0">9.7%</text>
<text x="1509.5" y="863.2" text-anchor="middle" fill="#f01818">-1.14</text>
<text x="1509.5" y="894.7" text-anchor="middle" fill="#1a1af0">0.00</text>
<text x="1509.5" y="926.6" text-anchor="middle" fill="#1a1af0">163.66</text>
<text x="1509.5" y="958.6" text-anchor="middle" fill="#f01818">-79.89</text>
</svg>
<div class="a" style="left:975px;top:976px;width:931px;height:25px;background:#293955;"></div>
<div class="a t " style="top:981px;line-height:16px;height:16px;left:1700px;width:60px;text-align:right;color:#fff;font-size:13.5px;">500%</div>
<div class="a" style="left:1770px;top:988px;width:7px;height:1px;background:#f2f2f2;"></div>
<div class="a" style="left:1784px;top:988px;width:94px;height:1px;background:#fff29d;"></div>
<div class="a" style="left:1832px;top:985px;width:1px;height:8px;background:#e6e6ee;"></div>
<div class="a" style="left:1878px;top:984px;width:3px;height:10px;background:#fff29d;"></div>
<div class="a" style="left:1888px;top:988px;width:7px;height:1px;background:#f2f2f2;"></div>
<div class="a" style="left:1891px;top:985px;width:1px;height:7px;background:#f2f2f2;"></div>
</body></html>
